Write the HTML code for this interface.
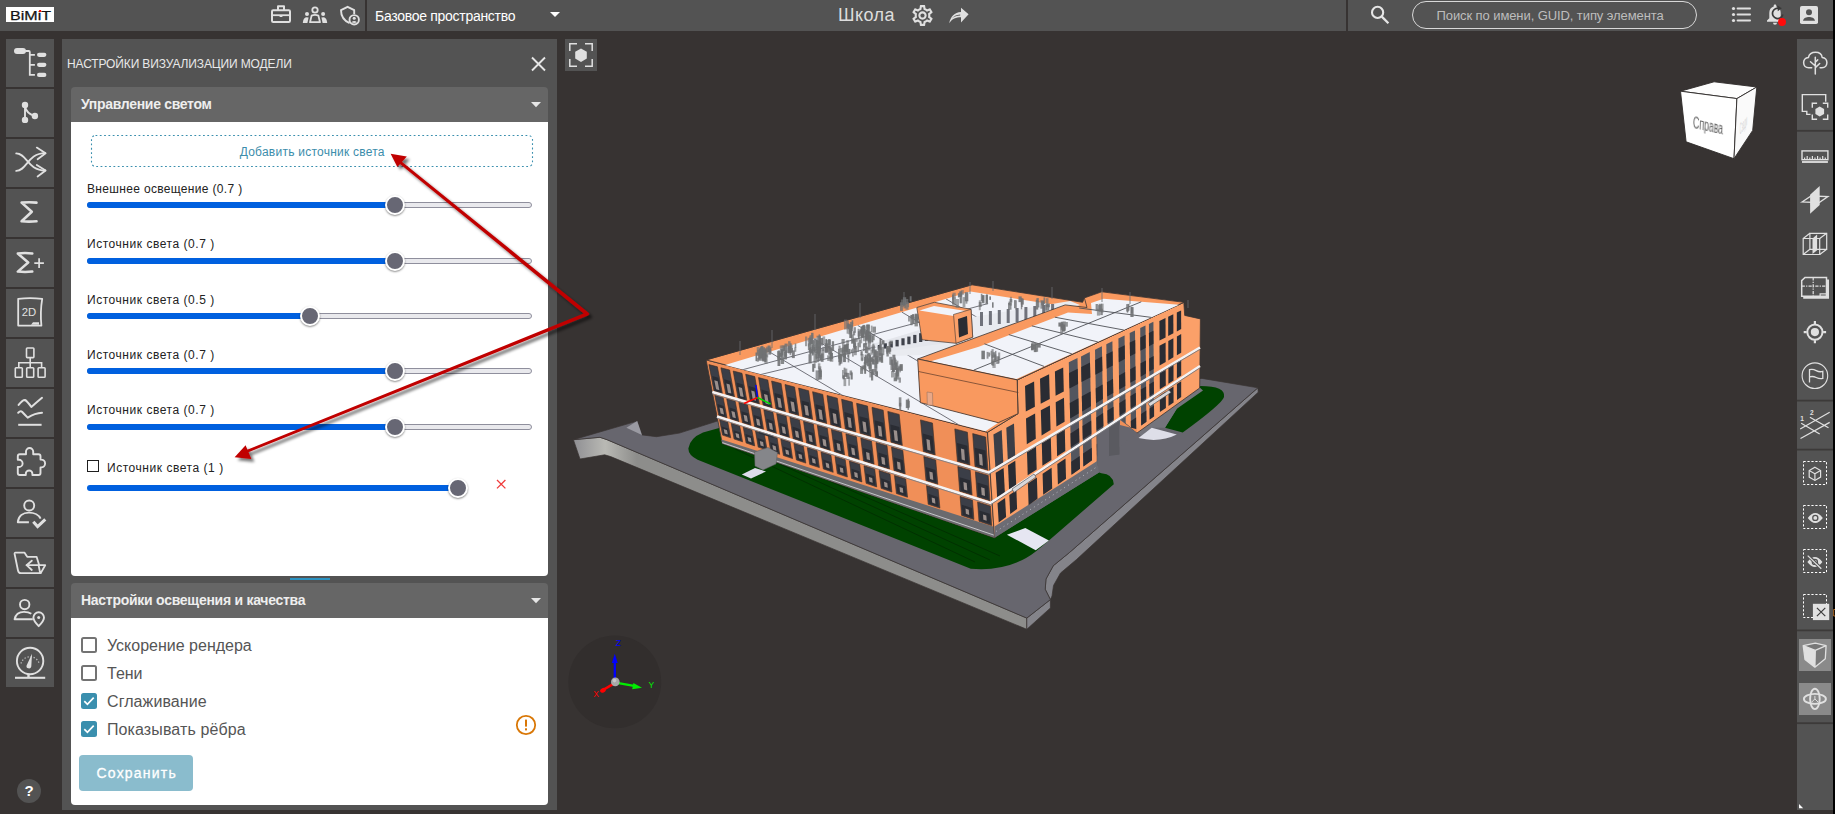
<!DOCTYPE html>
<html lang="ru">
<head>
<meta charset="utf-8">
<title>BIMIT</title>
<style>
*{box-sizing:border-box;margin:0;padding:0}
html,body{width:1835px;height:814px;overflow:hidden;background:#373332;font-family:"Liberation Sans",sans-serif;}
.abs{position:absolute}
#top{position:absolute;left:0;top:0;width:1835px;height:31px;background:#535353}
.t{position:absolute;white-space:nowrap;line-height:1}
#logo{position:absolute;left:6px;top:7px;width:48px;height:15px;background:#fff}
.lb{position:absolute;left:6px;width:48px;height:48px;background:#535353}
.lb svg,.rb svg{position:absolute;left:0;top:0}
#panel{position:absolute;left:62px;top:39px;width:495px;height:771px;background:#535353}
.ah{position:absolute;left:9px;width:477px;background:#666;border-radius:4px 4px 0 0}
.ab{position:absolute;left:9px;width:477px;background:#fff;border-radius:0 0 4px 4px}
#right{position:absolute;left:1797px;top:39px;width:36px;height:771px;background:#535353}

.ah{left:71px}.ab{left:71px}
.sl{font-size:12px;color:#222}
.hb{font-size:14px;font-weight:bold;color:#eee}
.trk{position:absolute;height:6px;border:1px solid #8f8f9d;background:#e9e9ed;border-radius:3px}
.prg{position:absolute;height:6px;background:#0060df;border-radius:3px}
.thb{position:absolute;width:20px;height:20px;border-radius:50%;background:#676774;border:2px solid #fff;box-shadow:0 1px 2px rgba(0,0,0,.45)}
.cb{position:absolute;left:81px;width:16px;height:16px;border:2px solid #737373;border-radius:2.500px;background:#fff}
.cb.on{border:none;background:#3a8fae}
.cl{left:107px;font-size:16px;color:#555}
</style>
</head>
<body>
<div id="top">
  <div id="logo"><svg width="48" height="15" viewBox="0 0 48 15"><text x="4" y="12.700" font-family="Liberation Sans, sans-serif" font-size="13.200" fill="#151515" stroke="#151515" stroke-width="0.250" textLength="41" lengthAdjust="spacingAndGlyphs">BiMiT</text><rect x="33.100" y="3" width="2" height="1.900" fill="#ff0000"/></svg></div>
  <!-- briefcase -->
  <svg class="abs" style="left:268px;top:2px" width="26" height="26" viewBox="0 0 26 26" fill="none" stroke="#e0e0e0" stroke-width="2" stroke-linejoin="round"><rect x="4" y="8.2" width="18" height="11.8" rx="1.2"/><path d="M10 8V4.2h6V8"/><path d="M4 13.2h18" stroke-width="1.8"/><rect x="11.6" y="13" width="2.8" height="2" fill="#e0e0e0" stroke="none"/></svg>
  <!-- people -->
  <svg class="abs" style="left:301px;top:2px" width="28" height="26" viewBox="0 0 28 26" fill="none" stroke="#e0e0e0" stroke-width="1.8"><circle cx="14" cy="8" r="2.7"/><path d="M9 20.2 L10.6 13.6 Q14 12.2 17.4 13.6 L19 20.2 Z" stroke-linejoin="round"/><g fill="#e0e0e0" stroke="none"><circle cx="6" cy="12" r="2"/><circle cx="22.1" cy="12" r="2"/><path d="M1.8 21 Q2.2 16 5 15.2 L7.6 15.4 L6.4 21Z"/><path d="M26.2 21 Q25.8 16 23 15.2 L20.4 15.4 L21.6 21Z"/></g></svg>
  <!-- shield user -->
  <svg class="abs" style="left:337px;top:2px" width="26" height="26" viewBox="0 0 26 26" fill="none" stroke="#e0e0e0" stroke-width="1.9" stroke-linejoin="round"><path d="M12.6 21.2 C7 18.6 4 14.5 4 8.2 L10.6 4.8 L17.2 8.2 V12"/><circle cx="17.2" cy="17.8" r="4.7" fill="#535353"/><g fill="#e0e0e0" stroke="none"><circle cx="17.2" cy="16.3" r="1.5"/><path d="M14.4 20.3 Q17.2 17.6 20 20.3 Q17.2 21.8 14.4 20.3Z"/></g></svg>
  <div class="abs" style="left:365px;top:0;width:2px;height:31px;background:#373332"></div>
  <div class="t" id="tspace" style="letter-spacing:-0.29px;left:375px;top:9px;font-size:14px;color:#fff">Базовое пространство</div>
  <svg class="abs" style="left:549px;top:11px" width="12" height="7" viewBox="0 0 12 7"><path d="M1 1h10L6 6z" fill="#fff"/></svg>
  <div class="t" id="tschool" style="letter-spacing:0.45px;left:838px;top:6px;font-size:18px;color:#ddd">Школа</div>
  <!-- gear -->
  <svg class="abs" style="left:910px;top:3px" width="25" height="25" viewBox="0 0 24 24"><path fill="#e0e0e0" d="M19.43 12.98c.04-.32.07-.64.07-.98 0-.34-.03-.66-.07-.98l2.11-1.65c.19-.15.24-.42.12-.64l-2-3.46c-.09-.16-.26-.25-.44-.25-.06 0-.12.01-.17.03l-2.49 1c-.52-.4-1.08-.73-1.69-.98l-.38-2.65C14.46 2.18 14.25 2 14 2h-4c-.25 0-.46.18-.49.42l-.38 2.65c-.61.25-1.17.59-1.69.98l-2.49-1c-.06-.02-.12-.03-.18-.03-.17 0-.34.09-.43.25l-2 3.46c-.13.22-.07.49.12.64l2.11 1.65c-.04.32-.07.65-.07.98 0 .33.03.66.07.98l-2.11 1.65c-.19.15-.24.42-.12.64l2 3.46c.09.16.26.25.44.25.06 0 .12-.01.17-.03l2.49-1c.52.4 1.08.73 1.69.98l.38 2.65c.03.24.24.42.49.42h4c.25 0 .46-.18.49-.42l.38-2.65c.61-.25 1.17-.59 1.69-.98l2.49 1c.06.02.12.03.18.03.17 0 .34-.09.43-.25l2-3.46c.12-.22.07-.49-.12-.64l-2.11-1.65zm-1.98-1.71c.04.31.05.52.05.73 0 .21-.02.43-.05.73l-.14 1.13.89.7 1.08.84-.7 1.21-1.27-.51-1.04-.42-.9.68c-.43.32-.84.56-1.25.73l-1.06.43-.16 1.13-.2 1.35h-1.4l-.19-1.35-.16-1.13-1.06-.43c-.43-.18-.83-.41-1.23-.71l-.91-.7-1.06.43-1.27.51-.7-1.21 1.08-.84.89-.7-.14-1.13c-.03-.31-.05-.54-.05-.74s.02-.43.05-.73l.14-1.13-.89-.7-1.08-.84.7-1.21 1.27.51 1.04.42.9-.68c.43-.32.84-.56 1.25-.73l1.06-.43.16-1.13.2-1.35h1.39l.19 1.35.16 1.13 1.06.43c.43.18.83.41 1.23.71l.91.7 1.06-.43 1.27-.51.7 1.21-1.07.85-.89.7.14 1.13zM12 8c-2.21 0-4 1.79-4 4s1.790 4 4 4 4-1.790 4-4-1.790-4-4-4zm0 6c-1.100 0-2-.9-2-2s.9-2 2-2 2 .9 2 2-.9 2-2 2z"/></svg>
  <!-- share -->
  <svg class="abs" style="left:947px;top:5px" width="24" height="20" viewBox="0 0 24 20"><path fill="#e0e0e0" d="M21.6 9.3 L14 2.8 V7 C7.5 7.6 3.6 11.4 2.2 18.2 C5.4 13.6 8.9 12.2 14 12.2 V17.6 Z M13.2 9.4 C9 9.6 6.6 11.2 5 13.6 C7.4 11.4 10 10.6 13.2 10.6Z" fill-rule="evenodd"/></svg>
  <div class="abs" style="left:1346px;top:0;width:2px;height:31px;background:#373332"></div>
  <!-- search -->
  <svg class="abs" style="left:1366px;top:2px" width="26" height="26" viewBox="0 0 26 26" fill="none" stroke="#e6e6e6" stroke-width="2.1"><circle cx="11.6" cy="10.4" r="5.6"/><path d="M15.8 14.6 L22.4 21.2" stroke-width="2.3"/></svg>
  <div class="abs" style="left:1412px;top:1px;width:285px;height:28px;border:1px solid #d8d8d8;border-radius:14px"></div>
  <div class="t" id="tsearch" style="letter-spacing:-0.09px;left:1436.5px;top:9px;font-size:13px;color:#bdbdbd">Поиск по имени, GUID, типу элемента</div>
  <!-- list -->
  <svg class="abs" style="left:1730px;top:4px" width="24" height="22" viewBox="0 0 24 22" fill="#e0e0e0"><circle cx="3.5" cy="4.5" r="1.6"/><circle cx="3.5" cy="10.5" r="1.6"/><circle cx="3.5" cy="16.5" r="1.6"/><rect x="6.6" y="3.5" width="14.4" height="2" rx="1"/><rect x="6.6" y="9.500" width="14.4" height="2" rx="1"/><rect x="6.6" y="15.5" width="14.4" height="2" rx="1"/></svg>
  <!-- bell -->
  <svg class="abs" style="left:1763px;top:2px" width="26" height="26" viewBox="0 0 26 26"><path fill="#e0e0e0" d="M12 2.600 c-.8 0-1.300.5-1.300 1.300 v.7 C7.800 5.400 6.300 7.900 6.300 11 v5.200 L4 18.500 v1.200 h16 v-1.200 l-2.300-2.300 V11 c0-3.100-1.500-5.600-4.400-6.400 v-.7 c0-.8-.5-1.300-1.300-1.300z M10 20.700 a2 2 0 0 0 4 0z"/><path d="M16.500 6.500 A5.200 5.200 0 1 0 19.800 12.500" fill="none" stroke="#3a3a3a" stroke-width="1.700"/><path d="M14.200 3.300 L18.800 6.300 L14.800 9.200z" fill="#3a3a3a"/><circle cx="19" cy="19.900" r="4" fill="#ff0a0a"/></svg>
  <!-- account -->
  <svg class="abs" style="left:1799px;top:5px" width="20" height="20" viewBox="0 0 20 20"><rect x="1" y="1" width="18" height="18" rx="1.800" fill="#e0e0e0"/><circle cx="10" cy="7.200" r="3" fill="#535353"/><path d="M4 15.800 C4.500 12.800 7.500 12 10 12 S15.500 12.800 16 15.800z" fill="#535353"/></svg>
</div>
<div class="lb" style="top:39px"><svg width="48" height="48" viewBox="0 0 48 48"><g fill="#e0e0e0" stroke="none"><rect x="8" y="9" width="12" height="6" rx="3"/><rect x="31" y="13.700" width="9.400" height="4.200" rx="2.100"/><rect x="31" y="23.700" width="9.400" height="4.200" rx="2.100"/><rect x="31" y="33.800" width="9.400" height="4.200" rx="2.100"/></g><path d="M19.500 12H22.800a1 1 0 0 1 1 1V35.900H28.900M23.800 15.800H28.900M23.800 25.800H28.900" fill="none" stroke="#e0e0e0" stroke-width="1.800"/></svg></div>
<div class="lb" style="top:89px"><svg width="48" height="48" viewBox="0 0 48 48"><g fill="#e0e0e0"><circle cx="19" cy="15.900" r="3.200"/><circle cx="19" cy="30.900" r="3.200"/><circle cx="28.900" cy="27" r="3.200"/></g><path d="M19 16V31M19 17.500C20 22.500 24 25.500 28.500 27" fill="none" stroke="#e0e0e0" stroke-width="1.900"/></svg></div>
<div class="lb" style="top:139px"><svg width="48" height="48" viewBox="0 0 48 48"><g fill="none" stroke="#e0e0e0" stroke-width="1.800" stroke-linecap="round" stroke-linejoin="round"><path d="M10.200 14.400C21 14.400 21.500 31.500 39.200 31.500"/><path d="M10.200 31.900C21 31.900 21.500 14.200 39.200 14.200"/><path d="M30.800 8.600L39.600 14.200 31.600 20.200"/><path d="M30.800 26L39.600 31.500 31.600 37.500"/></g></svg></div>
<div class="lb" style="top:189px"><svg width="48" height="48" viewBox="0 0 48 48"><path d="M30.500 13.600Q23 12.800 15.600 13.600L25.800 22.700 15.600 32.300Q23 33 30.500 32.300" fill="none" stroke="#e0e0e0" stroke-width="2.600" stroke-linecap="round" stroke-linejoin="round"/></svg></div>
<div class="lb" style="top:239px"><svg width="48" height="48" viewBox="0 0 48 48"><path d="M26.300 14.500Q19 13.700 11.800 14.500L22.200 23.500 11.800 32.600Q19 33.400 26.300 32.600" fill="none" stroke="#e0e0e0" stroke-width="2.500" stroke-linecap="round" stroke-linejoin="round"/><path d="M28.300 24.100H37.900M33.100 19.300V28.900" stroke="#e0e0e0" stroke-width="1.700" fill="none"/></svg></div>
<div class="lb" style="top:289px"><svg width="48" height="48" viewBox="0 0 48 48"><path d="M12.200 9.800Q24 8.600 36.200 9.800Q34 23 35.400 36.600H12.200Z" fill="none" stroke="#e0e0e0" stroke-width="1.800" stroke-linejoin="round"/><path d="M25 35.800L27 33.200H33V35.800Z" fill="#e0e0e0"/><text x="15.800" y="27" font-family="Liberation Sans, sans-serif" font-size="11.500" fill="#e0e0e0" textLength="14.500" lengthAdjust="spacingAndGlyphs">2D</text></svg></div>
<div class="lb" style="top:339px"><svg width="48" height="48" viewBox="0 0 48 48"><g fill="none" stroke="#e0e0e0" stroke-width="1.600"><rect x="20.500" y="9" width="7.400" height="9.600" rx="0.800"/><rect x="9.300" y="28.800" width="7" height="9.400" rx="0.800"/><rect x="20.700" y="28.800" width="7" height="9.400" rx="0.800"/><rect x="32.100" y="28.800" width="7" height="9.400" rx="0.800"/><path d="M24.200 18.600V28.800M12.800 28.800V23.800H35.600V28.800"/></g></svg></div>
<div class="lb" style="top:389px"><svg width="48" height="48" viewBox="0 0 48 48"><g fill="none" stroke="#e0e0e0" stroke-width="2" stroke-linecap="round" stroke-linejoin="round"><path d="M12.600 15.900Q17 10.500 19 11Q21 12 25.300 18Q31 13 36 8.800"/><path d="M12.200 23.800Q14.500 21.500 16 22.800Q19 26 21.700 28.600Q29 24 36 23.700"/><path d="M12.200 35.800H35.600" stroke-linecap="butt"/></g></svg></div>
<div class="lb" style="top:439px"><svg width="48" height="48" viewBox="0 0 48 48"><path d="M13.800 15.200H20V12.600a3.600 3.600 0 0 1 7.200 0V15.200H32.500a2 2 0 0 1 2 2V20.600H35.200a3.900 3.900 0 0 1 0 7.800H34.500V34a2 2 0 0 1-2 2H26.400V34.800a3.300 3.300 0 0 0-6.600 0V36H13.800a2 2 0 0 1-2-2V28H13a3.600 3.600 0 0 0 0-7.200H11.800V17.200a2 2 0 0 1 2-2Z" fill="none" stroke="#e0e0e0" stroke-width="1.900" stroke-linejoin="round"/></svg></div>
<div class="lb" style="top:489px"><svg width="48" height="48" viewBox="0 0 48 48"><g fill="none" stroke="#e0e0e0" stroke-width="1.900"><circle cx="23.200" cy="16.500" r="5"/><path d="M22.900 33.200H11.800C12.500 27 17 23.600 22.900 23.600C28.500 23.600 33 26.500 34.600 29.600" stroke-linejoin="round"/><path d="M27.300 32.800L31.600 37.600 39.300 30.300" stroke-width="3"/></g></svg></div>
<div class="lb" style="top:539px"><svg width="48" height="48" viewBox="0 0 48 48"><g fill="none" stroke="#e0e0e0" stroke-width="1.800" stroke-linejoin="round" stroke-linecap="round"><path d="M33.200 26.200L30.600 17.800H21.200L18.400 13.600H9.600Q8.400 13.800 8.600 15L12 31.500Q12.600 34.200 14.800 34.200H34.600"/><path d="M20.600 26.200H39.200L35 33.600Q34.700 34.200 34.200 34.200L32.600 26.200"/><path d="M25.800 21.700L20.600 26.200 25.800 31"/></g></svg></div>
<div class="lb" style="top:589px"><svg width="48" height="48" viewBox="0 0 48 48"><g fill="none" stroke="#e0e0e0" stroke-width="1.900"><circle cx="18.700" cy="15.600" r="4.700"/><path d="M26.800 30.300H8.600C9.500 25.500 13 22.900 18 22.900C21 22.900 23.500 23.500 25.300 24.800" stroke-linejoin="round"/><path d="M32.700 37.200C30 34.500 27.400 31.500 27.400 28.600A5.300 5.300 0 0 1 38 28.600C38 31.500 35.400 34.500 32.700 37.200Z" fill="#535353" stroke-linejoin="round"/></g><circle cx="32.700" cy="28.400" r="1.500" fill="#e0e0e0"/></svg></div>
<div class="lb" style="top:639px"><svg width="48" height="48" viewBox="0 0 48 48"><g fill="none" stroke="#e0e0e0"><circle cx="24.100" cy="22" r="13.200" stroke-width="1.900"/><path d="M15 24.500A9.500 9.500 0 0 1 33.200 24.500" stroke-width="1.200" stroke-dasharray="1.300 1.800" opacity="0.750"/><path d="M22.500 35V38.500" stroke-width="2.400"/><path d="M9 38.800H39.200" stroke-width="2.100"/></g><path d="M26 14.800L25.300 27.600A2.200 2.200 0 0 1 20.600 26.400Z" fill="#e0e0e0"/></svg></div>
<div class="abs" style="left:17px;top:779px;width:24px;height:24px;border-radius:50%;background:#535353"></div><div class="t" id="help" style="left:24.500px;top:782.500px;font-size:15px;font-weight:bold;color:#fff">?</div>
<div id="panel"></div>
<div class="t" id="ptitle" style="letter-spacing:-0.13px;left:67px;top:58px;font-size:12px;color:#e8e8e8">НАСТРОЙКИ ВИЗУАЛИЗАЦИИ МОДЕЛИ</div>
<svg class="abs" style="left:529px;top:54px" width="20" height="20" viewBox="0 0 20 20"><path d="M3 3.500l13 13M16 3.500l-13 13" stroke="#e6e6e6" stroke-width="1.900" fill="none"/></svg>
<div class="ah" style="top:87px;height:35px"></div>
<div class="t hb" id="h1" style="letter-spacing:-0.31px;left:81px;top:97px">Управление светом</div>
<svg class="abs" style="left:530px;top:101px" width="12" height="7" viewBox="0 0 12 7"><path d="M1 1h10L6 6.300z" fill="#e6e6e6"/></svg>
<div class="ab" style="top:122px;height:454px"></div>
<svg class="abs" style="left:90px;top:134px" width="444" height="34"><rect x="1.500" y="1.500" width="441" height="31" rx="4" fill="none" stroke="#3a8fae" stroke-width="1.100" stroke-dasharray="1.800 2.500"/></svg>
<div class="t" id="addbtn" style="letter-spacing:0.24px;left:239.700px;top:145.500px;font-size:12px;color:#3c8dab">Добавить источник света</div>
<div class="t sl" id="l0" style="letter-spacing:0.33px;left:87px;top:183.1px">Внешнее освещение (0.7 )</div><div class="trk" style="left:87px;top:202px;width:445px"></div><div class="prg" style="left:87px;top:202px;width:307.5px"></div><div class="thb" style="left:384.5px;top:195px"></div><div class="t sl" id="l1" style="letter-spacing:0.54px;left:87px;top:238.4px">Источник света (0.7 )</div><div class="trk" style="left:87px;top:257.5px;width:445px"></div><div class="prg" style="left:87px;top:257.5px;width:307.5px"></div><div class="thb" style="left:384.5px;top:250.5px"></div><div class="t sl" id="l2" style="letter-spacing:0.54px;left:87px;top:293.8px">Источник света (0.5 )</div><div class="trk" style="left:87px;top:313px;width:445px"></div><div class="prg" style="left:87px;top:313px;width:222.5px"></div><div class="thb" style="left:299.5px;top:306px"></div><div class="t sl" id="l3" style="letter-spacing:0.54px;left:87px;top:349.1px">Источник света (0.7 )</div><div class="trk" style="left:87px;top:368.3px;width:445px"></div><div class="prg" style="left:87px;top:368.3px;width:307.5px"></div><div class="thb" style="left:384.5px;top:361.3px"></div><div class="t sl" id="l4" style="letter-spacing:0.54px;left:87px;top:404.4px">Источник света (0.7 )</div><div class="trk" style="left:87px;top:424px;width:445px"></div><div class="prg" style="left:87px;top:424px;width:307.5px"></div><div class="thb" style="left:384.5px;top:417px"></div><div class="abs" style="left:87px;top:460px;width:12px;height:12px;border:1px solid #1f1f1f;background:#fff"></div><div class="t sl" id="l5" style="letter-spacing:0.54px;left:107px;top:462px">Источник света (1 )</div><div class="prg" style="left:87px;top:485px;width:371.0px"></div><div class="thb" style="left:448.0px;top:478px"></div><svg class="abs" style="left:495px;top:478px" width="12" height="12" viewBox="0 0 12 12"><path d="M2 2l8.4 8.400M10.400 2L2 10.400" stroke="#f03c3c" stroke-width="1.300" fill="none"/></svg>
<div class="abs" style="left:290px;top:578px;width:40px;height:2px;background:#2b93c2"></div>
<div class="ah" style="top:583px;height:35px"></div>
<div class="t hb" id="h2" style="letter-spacing:-0.27px;left:81px;top:593px">Настройки освещения и качества</div>
<svg class="abs" style="left:530px;top:597px" width="12" height="7" viewBox="0 0 12 7"><path d="M1 1h10L6 6.300z" fill="#e6e6e6"/></svg>
<div class="ab" style="top:618px;height:187px"></div>
<div class="cb" style="top:637px"></div><div class="t cl" id="c1" style="top:638px">Ускорение рендера</div>
<div class="cb" style="top:665px"></div><div class="t cl" id="c2" style="top:666px">Тени</div>
<div class="cb on" style="top:693px"><svg width="16" height="16" viewBox="0 0 16 16"><path d="M3.300 8.200l3.100 3.100 6.300-6.600" stroke="#fff" stroke-width="1.700" fill="none"/></svg></div><div class="t cl" id="c3" style="letter-spacing:0.08px;top:694px">Сглаживание</div>
<div class="cb on" style="top:721px"><svg width="16" height="16" viewBox="0 0 16 16"><path d="M3.300 8.200l3.100 3.100 6.300-6.600" stroke="#fff" stroke-width="1.700" fill="none"/></svg></div><div class="t cl" id="c4" style="letter-spacing:0.10px;top:722px">Показывать рёбра</div>
<svg class="abs" style="left:514px;top:713px" width="24" height="24" viewBox="0 0 24 24"><circle cx="12" cy="12" r="9.200" fill="none" stroke="#d97706" stroke-width="1.800"/><rect x="11" y="6.600" width="2" height="7" fill="#d97706"/><rect x="11" y="15.300" width="2" height="2.100" fill="#d97706"/></svg>
<div class="abs" id="save" style="left:79px;top:755px;width:114px;height:36px;background:#8abccd;border-radius:4px"></div>
<div class="t" id="savet" style="-webkit-text-stroke:0.300px #fff;left:96.500px;top:766px;font-size:14px;color:#fff;letter-spacing:1.200px">Сохранить</div>
<div class="abs" id="fit" style="left:565px;top:39px;width:32px;height:32px;background:#535353"><svg width="32" height="32" viewBox="0 0 32 32"><path d="M4.800 12V4.800H12M20 4.800H27.200V12M27.200 20V27.200H20M12 27.200H4.800V20" fill="none" stroke="#e0e0e0" stroke-width="1.500"/><polygon points="16.0,9.5 21.8,12.8 21.8,19.5 16.0,22.9 10.2,19.6 10.2,12.8" fill="#e0e0e0"/></svg></div>
<!--VIEWPORT-->
<svg class="abs" style="left:1832px;top:607px;z-index:5" width="3" height="11" viewBox="0 0 3 11"><path d="M3 2.500H1.700V9H3" fill="none" stroke="#d9822b" stroke-width="0.800"/></svg>
<svg class="abs" id="vcube" style="left:1660px;top:70px" width="120" height="100" viewBox="1660 70 120 100">
<polygon points="1680.500,91.200 1714.100,81.800 1756.800,87 1736.900,98.600" fill="#fdfdfd" stroke="#2e2a29" stroke-width="0.900" stroke-linejoin="round"/>
<polygon points="1680.500,91.200 1736.900,98.600 1734,158.700 1686.100,141.800" fill="#ffffff" stroke="#2e2a29" stroke-width="0.900" stroke-linejoin="round"/>
<polygon points="1736.900,98.600 1756.800,87 1752.700,130.400 1734,158.700" fill="#fafafa" stroke="#2e2a29" stroke-width="0.900" stroke-linejoin="round"/>
<text transform="matrix(0.545 0.118 -0.04 1 1692.800 127.900)" font-family="Liberation Sans, sans-serif" font-size="16" fill="#606060" style="filter:blur(0.250px)">Справа</text>
<text transform="matrix(0.16 -0.22 0 1 1739.800 135)" font-family="Liberation Sans, sans-serif" font-size="16" fill="#d2d2d2">Сзади</text>
</svg>
<svg class="abs" id="gizmo" style="left:560px;top:626px" width="112" height="112" viewBox="560 626 112 112">
<circle cx="614.800" cy="681.900" r="46.400" fill="#322e2d"/>
<path d="M614.800 680V661" stroke="#0000ff" stroke-width="2.300"/><path d="M614.800 653.800L617.700 663H611.900Z" fill="#0000ff"/>
<path d="M617 682.800L634 685.900" stroke="#00ee00" stroke-width="2.300"/><path d="M642 687.700L632.200 689.200L633.400 683Z" fill="#00ee00"/>
<path d="M613 684.200L603 690" stroke="#ff0000" stroke-width="2.600"/><ellipse cx="603" cy="690.300" rx="3" ry="2.200" fill="#ff0000" transform="rotate(-30 603 690.300)"/>
<circle cx="615.300" cy="681.900" r="4.300" fill="#a9a9a9"/><circle cx="614.500" cy="680.600" r="1.800" fill="#c8c8c8"/>
<text x="615.700" y="646.300" font-family="Liberation Sans, sans-serif" font-size="8.500" fill="#0000ff">Z</text>
<text x="648.500" y="688.300" font-family="Liberation Sans, sans-serif" font-size="8.500" fill="#00ee00">Y</text>
<text x="593.300" y="696.800" font-family="Liberation Sans, sans-serif" font-size="8.500" fill="#ff0000">X</text>
</svg>
<!--MODEL_START--><svg class="abs" id="model" style="left:0;top:0" width="1835" height="814" viewBox="0 0 1835 814" shape-rendering="geometricPrecision"><defs><linearGradient id="tg" x1="0" x2="1" y1="0" y2="0"><stop offset="0" stop-color="#8f8f93"/><stop offset="0.07" stop-color="#b9b9b4"/><stop offset="0.14" stop-color="#8d8d8b"/><stop offset="1" stop-color="#8d8d8b"/></linearGradient></defs><polygon points="1257.9,387.8 1258.2,392.2 1076.5,559.5 1060.5,573.0 1053.5,585.5 1052.0,596.0 1050.4,599.6 1045.2,589.3 1046.0,579.0 1053.3,565.7 1069.6,552.4" fill="#84848a" stroke="#3a3432" stroke-width="0.7" stroke-linejoin="round"/><polygon points="573.4,439.7 599.9,437.3 607.1,439.7 1026.8,618.1 1026.8,629.3 610.7,456.6 604.7,454.8 580.0,459.0" fill="url(#tg)" stroke="#3a3432" stroke-width="0.7" stroke-linejoin="round"/><polygon points="1026.8,618.1 1050.4,599.6 1050.4,607.9 1026.8,629.3" fill="#84848a" stroke="#3a3432" stroke-width="0.7" stroke-linejoin="round"/><polygon points="573.4,439.7 637.2,421.1 642.0,434.9 656.5,436.7 679.4,433.1 719.1,420.5 1201.9,378.4 1257.9,387.8 1069.6,552.4 1053.3,565.7 1046.0,579.0 1045.2,589.3 1050.4,599.6 1026.8,618.1 607.1,439.7 599.9,437.3" fill="#67666e" stroke="#3a3432" stroke-width="0.7" stroke-linejoin="round"/><polygon points="626.4,427.7 637.2,421.1 642.0,434.9" fill="#9a9aa2"/><path d="M688.4 448.2 Q690 438 703 432.5 L719.1 428 L722.3 443.6 L994.5 537.8 L1099 472.5 L1101.5 473.2 Q1113 474 1113.8 484.2 L1048.9 540.6 L1036.4 551 Q1010 572 970.8 568.7 L697.6 459.7 Q688 455 688.4 448.2Z" fill="#004200"/><path d="M735 449L975 562M760 455L990 560M800 468L1000 556" stroke="#002a00" stroke-width="0.7" fill="none"/><path d="M1200.4 386 Q1226 386 1224 397 Q1222 404 1182.7 432.5 L1165 427.8 L1176.8 408.7Z" fill="#004200"/><polygon points="1137.0,430.5 1199.7,387.5 1203.0,390.5 1176.8,408.7 1165.0,427.8 1151.7,427.8 1141.0,436.0" fill="#74747c"/><polygon points="1006.9,534.7 1025.3,528.1 1048.9,540.6 1035.7,550.2" fill="#e6e6f2"/><polygon points="741.8,474.4 755.0,468.0 766.0,471.5 751.0,478.5" fill="#dcdcea"/><path d="M1138.5 438.1 L1151.7 427.8 L1176.8 434.5 Q1160 443 1138.5 438.1Z" fill="#dedee8"/><polygon points="1109.0,422.0 1119.3,420.0 1119.3,454.4 1109.0,455.0" fill="#5c5c62"/><polygon points="1120.0,424.9 1137.0,429.3 1137.0,404.0 1120.0,396.0" fill="#f08f58"/><polygon points="706.1,359.9 987.5,432.3 994.5,537.8 722.3,443.6" fill="#f08f58" stroke="#3a3432" stroke-width="0.8" stroke-linejoin="round"/><polygon points="721.5,439.4 993.8,526.7 994.5,537.8 722.3,443.6" fill="#6a6a6e"/><path d="M722.3 442.6L994.5 535.3" stroke="#d0d0d4" stroke-width="0.900"/><polygon points="708.9,364.6 717.4,366.8 722.4,393.5 714.0,391.0" fill="#3b3e47" stroke="#3a2a22" stroke-width="0.6" stroke-linejoin="round"/><polygon points="712.2,376.0 718.4,377.7 721.1,392.3 715.0,390.5" fill="#2a2c33"/><polygon points="714.3,380.2 717.7,381.2 719.4,390.2 716.1,389.2" fill="#9a8f8c"/><polygon points="714.8,395.2 723.2,397.7 727.0,418.0 718.7,415.3" fill="#3b3e47" stroke="#3a2a22" stroke-width="0.6" stroke-linejoin="round"/><polygon points="717.5,404.0 723.7,405.9 725.7,416.8 719.6,414.9" fill="#2a2c33"/><polygon points="719.5,407.4 722.8,408.4 724.0,414.6 720.7,413.6" fill="#9a8f8c"/><polygon points="719.5,419.5 727.8,422.2 730.7,437.8 722.5,435.1" fill="#3b3e47" stroke="#3a2a22" stroke-width="0.6" stroke-linejoin="round"/><polygon points="721.8,426.4 727.9,428.4 729.5,436.6 723.4,434.6" fill="#2a2c33"/><polygon points="723.7,429.1 727.0,430.2 727.8,434.5 724.5,433.4" fill="#9a8f8c"/><polygon points="720.9,367.8 729.6,370.0 734.5,396.9 725.9,394.5" fill="#3b3e47" stroke="#3a2a22" stroke-width="0.6" stroke-linejoin="round"/><polygon points="724.1,379.3 730.5,381.0 733.2,395.8 726.8,393.9" fill="#2a2c33"/><polygon points="726.4,383.6 729.7,384.5 731.4,393.6 728.0,392.7" fill="#9a8f8c"/><polygon points="726.7,398.7 735.2,401.2 738.9,421.7 730.4,419.0" fill="#3b3e47" stroke="#3a2a22" stroke-width="0.6" stroke-linejoin="round"/><polygon points="729.4,407.6 735.7,409.5 737.7,420.5 731.4,418.5" fill="#2a2c33"/><polygon points="731.4,411.0 734.7,412.0 735.9,418.3 732.6,417.3" fill="#9a8f8c"/><polygon points="731.2,423.3 739.7,426.0 742.6,441.8 734.1,439.0" fill="#3b3e47" stroke="#3a2a22" stroke-width="0.6" stroke-linejoin="round"/><polygon points="733.6,430.2 739.8,432.3 741.3,440.6 735.1,438.5" fill="#2a2c33"/><polygon points="735.5,433.0 738.8,434.1 739.5,438.4 736.3,437.3" fill="#9a8f8c"/><polygon points="733.2,371.0 742.0,373.3 746.8,400.5 738.0,398.0" fill="#3b3e47" stroke="#3a2a22" stroke-width="0.6" stroke-linejoin="round"/><polygon points="736.3,382.6 742.9,384.4 745.5,399.3 739.0,397.4" fill="#2a2c33"/><polygon points="738.6,387.0 742.0,387.9 743.6,397.1 740.3,396.2" fill="#9a8f8c"/><polygon points="738.8,402.3 747.5,404.8 751.1,425.6 742.5,422.8" fill="#3b3e47" stroke="#3a2a22" stroke-width="0.6" stroke-linejoin="round"/><polygon points="741.4,411.2 747.9,413.2 749.9,424.4 743.4,422.3" fill="#2a2c33"/><polygon points="743.6,414.7 746.9,415.7 748.0,422.1 744.7,421.1" fill="#9a8f8c"/><polygon points="743.2,427.1 751.9,429.9 754.7,445.9 746.1,443.0" fill="#3b3e47" stroke="#3a2a22" stroke-width="0.6" stroke-linejoin="round"/><polygon points="745.5,434.1 752.0,436.2 753.4,444.6 747.0,442.5" fill="#2a2c33"/><polygon points="747.5,437.0 750.8,438.0 751.6,442.4 748.3,441.3" fill="#9a8f8c"/><polygon points="745.7,374.2 754.8,376.6 759.4,404.1 750.4,401.5" fill="#3b3e47" stroke="#3a2a22" stroke-width="0.6" stroke-linejoin="round"/><polygon points="748.8,386.0 755.6,387.9 758.1,402.9 751.4,401.0" fill="#2a2c33"/><polygon points="751.2,390.4 754.5,391.4 756.1,400.7 752.8,399.8" fill="#9a8f8c"/><polygon points="751.2,405.9 760.1,408.5 763.6,429.5 754.7,426.7" fill="#3b3e47" stroke="#3a2a22" stroke-width="0.6" stroke-linejoin="round"/><polygon points="753.8,415.0 760.5,417.0 762.4,428.3 755.7,426.2" fill="#2a2c33"/><polygon points="756.0,418.5 759.3,419.5 760.4,426.0 757.1,425.0" fill="#9a8f8c"/><polygon points="755.5,431.0 764.3,433.9 767.1,450.0 758.2,447.1" fill="#3b3e47" stroke="#3a2a22" stroke-width="0.6" stroke-linejoin="round"/><polygon points="757.7,438.1 764.4,440.3 765.8,448.8 759.2,446.6" fill="#2a2c33"/><polygon points="759.8,441.0 763.1,442.1 763.8,446.5 760.6,445.4" fill="#9a8f8c"/><polygon points="758.5,377.6 767.8,380.0 772.2,407.9 763.1,405.2" fill="#3b3e47" stroke="#3a2a22" stroke-width="0.6" stroke-linejoin="round"/><polygon points="761.5,389.5 768.5,391.4 771.0,406.7 764.0,404.7" fill="#2a2c33"/><polygon points="764.0,394.0 767.4,394.9 768.9,404.4 765.6,403.4" fill="#9a8f8c"/><polygon points="763.8,409.6 772.9,412.3 776.4,433.5 767.3,430.6" fill="#3b3e47" stroke="#3a2a22" stroke-width="0.6" stroke-linejoin="round"/><polygon points="766.4,418.8 773.3,420.9 775.1,432.3 768.2,430.1" fill="#2a2c33"/><polygon points="768.7,422.4 772.0,423.4 773.0,429.9 769.7,428.9" fill="#9a8f8c"/><polygon points="768.0,435.0 777.1,437.9 779.7,454.3 770.7,451.3" fill="#3b3e47" stroke="#3a2a22" stroke-width="0.6" stroke-linejoin="round"/><polygon points="770.2,442.2 777.1,444.4 778.5,453.0 771.6,450.7" fill="#2a2c33"/><polygon points="772.4,445.1 775.7,446.2 776.4,450.7 773.1,449.6" fill="#9a8f8c"/><polygon points="771.6,381.0 781.1,383.5 785.4,411.7 776.0,408.9" fill="#3b3e47" stroke="#3a2a22" stroke-width="0.6" stroke-linejoin="round"/><polygon points="774.6,393.0 781.8,395.0 784.1,410.4 777.0,408.4" fill="#2a2c33"/><polygon points="777.1,397.6 780.5,398.6 782.0,408.1 778.6,407.2" fill="#9a8f8c"/><polygon points="776.7,413.4 786.1,416.1 789.4,437.6 780.1,434.7" fill="#3b3e47" stroke="#3a2a22" stroke-width="0.6" stroke-linejoin="round"/><polygon points="779.3,422.7 786.4,424.8 788.1,436.4 781.1,434.1" fill="#2a2c33"/><polygon points="781.6,426.3 784.9,427.3 786.0,434.0 782.7,432.9" fill="#9a8f8c"/><polygon points="780.8,439.1 790.1,442.1 792.6,458.6 783.4,455.5" fill="#3b3e47" stroke="#3a2a22" stroke-width="0.6" stroke-linejoin="round"/><polygon points="783.0,446.4 790.0,448.7 791.4,457.4 784.4,455.0" fill="#2a2c33"/><polygon points="785.3,449.4 788.5,450.4 789.2,454.9 786.0,453.9" fill="#9a8f8c"/><polygon points="785.0,384.5 794.6,387.0 798.8,415.5 789.3,412.8" fill="#3b3e47" stroke="#3a2a22" stroke-width="0.6" stroke-linejoin="round"/><polygon points="787.9,396.7 795.3,398.7 797.6,414.3 790.2,412.2" fill="#2a2c33"/><polygon points="790.5,401.3 793.9,402.3 795.3,411.9 792.0,411.0" fill="#9a8f8c"/><polygon points="789.9,417.3 799.5,420.1 802.7,441.8 793.2,438.8" fill="#3b3e47" stroke="#3a2a22" stroke-width="0.6" stroke-linejoin="round"/><polygon points="792.4,426.6 799.7,428.9 801.5,440.5 794.2,438.3" fill="#2a2c33"/><polygon points="794.9,430.4 798.2,431.4 799.2,438.1 795.9,437.1" fill="#9a8f8c"/><polygon points="793.9,443.3 803.4,446.3 805.8,463.1 796.4,459.9" fill="#3b3e47" stroke="#3a2a22" stroke-width="0.6" stroke-linejoin="round"/><polygon points="796.1,450.6 803.3,453.0 804.6,461.8 797.4,459.4" fill="#2a2c33"/><polygon points="798.4,453.7 801.7,454.8 802.4,459.3 799.1,458.2" fill="#9a8f8c"/><polygon points="798.6,388.1 808.6,390.7 812.6,419.5 802.8,416.7" fill="#3b3e47" stroke="#3a2a22" stroke-width="0.6" stroke-linejoin="round"/><polygon points="801.5,400.4 809.1,402.5 811.4,418.3 803.8,416.1" fill="#2a2c33"/><polygon points="804.2,405.1 807.6,406.1 809.0,415.8 805.6,414.9" fill="#9a8f8c"/><polygon points="803.5,421.2 813.3,424.1 816.3,446.1 806.6,443.0" fill="#3b3e47" stroke="#3a2a22" stroke-width="0.6" stroke-linejoin="round"/><polygon points="805.9,430.7 813.4,433.0 815.1,444.8 807.6,442.5" fill="#2a2c33"/><polygon points="808.5,434.5 811.8,435.5 812.7,442.3 809.4,441.3" fill="#9a8f8c"/><polygon points="807.3,447.6 817.0,450.7 819.4,467.6 809.7,464.4" fill="#3b3e47" stroke="#3a2a22" stroke-width="0.6" stroke-linejoin="round"/><polygon points="809.4,455.0 816.9,457.4 818.1,466.3 810.7,463.8" fill="#2a2c33"/><polygon points="811.9,458.1 815.1,459.2 815.8,463.8 812.5,462.7" fill="#9a8f8c"/><polygon points="812.6,391.7 822.8,394.4 826.7,423.6 816.7,420.7" fill="#3b3e47" stroke="#3a2a22" stroke-width="0.6" stroke-linejoin="round"/><polygon points="815.5,404.2 823.3,406.4 825.5,422.3 817.6,420.1" fill="#2a2c33"/><polygon points="818.3,409.0 821.6,410.0 823.0,419.9 819.6,418.9" fill="#9a8f8c"/><polygon points="817.3,425.3 827.3,428.2 830.3,450.5 820.4,447.3" fill="#3b3e47" stroke="#3a2a22" stroke-width="0.6" stroke-linejoin="round"/><polygon points="819.7,434.9 827.5,437.2 829.1,449.2 821.3,446.8" fill="#2a2c33"/><polygon points="822.4,438.8 825.7,439.8 826.6,446.7 823.3,445.6" fill="#9a8f8c"/><polygon points="821.0,451.9 830.9,455.1 833.2,472.3 823.3,468.9" fill="#3b3e47" stroke="#3a2a22" stroke-width="0.6" stroke-linejoin="round"/><polygon points="823.1,459.4 830.8,462.0 832.0,471.0 824.3,468.4" fill="#2a2c33"/><polygon points="825.6,462.6 828.9,463.7 829.5,468.4 826.3,467.3" fill="#9a8f8c"/><polygon points="827.0,395.5 837.3,398.2 841.1,427.8 830.8,424.8" fill="#3b3e47" stroke="#3a2a22" stroke-width="0.6" stroke-linejoin="round"/><polygon points="829.7,408.1 837.8,410.3 839.9,426.5 831.8,424.2" fill="#2a2c33"/><polygon points="832.6,413.0 836.0,413.9 837.3,424.0 833.9,423.0" fill="#9a8f8c"/><polygon points="831.4,429.4 841.7,432.5 844.6,455.0 834.4,451.8" fill="#3b3e47" stroke="#3a2a22" stroke-width="0.6" stroke-linejoin="round"/><polygon points="833.8,439.2 841.8,441.6 843.3,453.7 835.4,451.2" fill="#2a2c33"/><polygon points="836.6,443.1 839.9,444.1 840.8,451.1 837.5,450.0" fill="#9a8f8c"/><polygon points="835.0,456.4 845.2,459.7 847.4,477.0 837.3,473.6" fill="#3b3e47" stroke="#3a2a22" stroke-width="0.6" stroke-linejoin="round"/><polygon points="837.1,464.0 845.0,466.6 846.2,475.7 838.2,473.1" fill="#2a2c33"/><polygon points="839.7,467.3 843.0,468.3 843.6,473.1 840.3,472.0" fill="#9a8f8c"/><polygon points="841.6,399.3 852.3,402.1 855.9,432.0 845.3,429.0" fill="#3b3e47" stroke="#3a2a22" stroke-width="0.6" stroke-linejoin="round"/><polygon points="844.3,412.1 852.7,414.4 854.6,430.8 846.3,428.4" fill="#2a2c33"/><polygon points="847.3,417.1 850.7,418.0 851.9,428.1 848.6,427.2" fill="#9a8f8c"/><polygon points="845.9,433.7 856.4,436.8 859.2,459.6 848.8,456.3" fill="#3b3e47" stroke="#3a2a22" stroke-width="0.6" stroke-linejoin="round"/><polygon points="848.2,443.5 856.5,446.0 858.0,458.3 849.7,455.7" fill="#2a2c33"/><polygon points="851.1,447.5 854.4,448.6 855.3,455.6 852.0,454.6" fill="#9a8f8c"/><polygon points="849.4,461.0 859.7,464.3 861.9,481.9 851.5,478.4" fill="#3b3e47" stroke="#3a2a22" stroke-width="0.6" stroke-linejoin="round"/><polygon points="851.4,468.7 859.5,471.3 860.7,480.6 852.5,477.8" fill="#2a2c33"/><polygon points="854.1,472.0 857.4,473.1 858.0,477.9 854.7,476.8" fill="#9a8f8c"/><polygon points="856.6,403.3 867.5,406.1 871.0,436.4 860.2,433.3" fill="#3b3e47" stroke="#3a2a22" stroke-width="0.6" stroke-linejoin="round"/><polygon points="859.3,416.2 867.9,418.5 869.7,435.1 861.2,432.6" fill="#2a2c33"/><polygon points="862.4,421.3 865.7,422.2 866.9,432.4 863.6,431.5" fill="#9a8f8c"/><polygon points="860.8,438.0 871.5,441.2 874.1,464.3 863.5,460.9" fill="#3b3e47" stroke="#3a2a22" stroke-width="0.6" stroke-linejoin="round"/><polygon points="863.0,448.0 871.5,450.6 872.9,463.0 864.5,460.3" fill="#2a2c33"/><polygon points="866.0,452.1 869.3,453.1 870.1,460.2 866.8,459.2" fill="#9a8f8c"/><polygon points="864.0,465.7 874.7,469.1 876.7,486.9 866.1,483.3" fill="#3b3e47" stroke="#3a2a22" stroke-width="0.6" stroke-linejoin="round"/><polygon points="866.0,473.5 874.4,476.2 875.5,485.5 867.1,482.7" fill="#2a2c33"/><polygon points="868.9,476.9 872.2,477.9 872.7,482.8 869.5,481.7" fill="#9a8f8c"/><polygon points="872.0,407.3 883.2,410.2 886.4,440.9 875.4,437.7" fill="#3b3e47" stroke="#3a2a22" stroke-width="0.6" stroke-linejoin="round"/><polygon points="874.6,420.3 883.4,422.8 885.2,439.6 876.4,437.0" fill="#2a2c33"/><polygon points="877.8,425.5 881.2,426.5 882.3,436.8 878.9,435.9" fill="#9a8f8c"/><polygon points="876.0,442.5 887.0,445.7 889.5,469.1 878.6,465.7" fill="#3b3e47" stroke="#3a2a22" stroke-width="0.6" stroke-linejoin="round"/><polygon points="878.2,452.6 886.9,455.2 888.3,467.8 879.5,465.0" fill="#2a2c33"/><polygon points="881.2,456.8 884.6,457.8 885.3,465.0 882.0,464.0" fill="#9a8f8c"/><polygon points="879.1,470.5 890.0,474.0 891.9,492.0 881.1,488.3" fill="#3b3e47" stroke="#3a2a22" stroke-width="0.6" stroke-linejoin="round"/><polygon points="881.0,478.3 889.7,481.2 890.7,490.6 882.1,487.7" fill="#2a2c33"/><polygon points="884.0,481.8 887.3,482.9 887.8,487.8 884.5,486.7" fill="#9a8f8c"/><polygon points="887.8,411.4 899.2,414.4 902.3,445.4 891.0,442.2" fill="#3b3e47" stroke="#3a2a22" stroke-width="0.6" stroke-linejoin="round"/><polygon points="890.3,424.6 899.4,427.1 901.1,444.1 892.0,441.5" fill="#2a2c33"/><polygon points="893.6,429.9 897.0,430.8 898.0,441.3 894.7,440.4" fill="#9a8f8c"/><polygon points="891.5,447.1 902.8,450.4 905.2,474.0 894.0,470.5" fill="#3b3e47" stroke="#3a2a22" stroke-width="0.6" stroke-linejoin="round"/><polygon points="893.7,457.3 902.7,460.0 904.0,472.7 895.0,469.9" fill="#2a2c33"/><polygon points="896.9,461.5 900.2,462.5 900.9,469.9 897.6,468.8" fill="#9a8f8c"/><polygon points="894.5,475.4 905.7,479.0 907.5,497.2 896.4,493.5" fill="#3b3e47" stroke="#3a2a22" stroke-width="0.6" stroke-linejoin="round"/><polygon points="896.4,483.4 905.3,486.3 906.3,495.9 897.4,492.9" fill="#2a2c33"/><polygon points="899.5,486.9 902.8,488.0 903.3,493.0 900.0,491.9" fill="#9a8f8c"/><polygon points="920.5,419.9 932.5,423.1 935.2,455.0 923.4,451.5" fill="#3b3e47" stroke="#3a2a22" stroke-width="0.6" stroke-linejoin="round"/><polygon points="922.8,433.5 932.5,436.2 934.0,453.6 924.4,450.8" fill="#2a2c33"/><polygon points="926.4,439.0 929.7,439.9 930.7,450.7 927.4,449.7" fill="#9a8f8c"/><polygon points="923.8,456.5 935.7,460.0 937.8,484.3 926.0,480.6" fill="#3b3e47" stroke="#3a2a22" stroke-width="0.6" stroke-linejoin="round"/><polygon points="925.9,467.0 935.5,469.9 936.6,483.0 927.0,480.0" fill="#2a2c33"/><polygon points="929.3,471.4 932.6,472.5 933.3,480.0 930.0,478.9" fill="#9a8f8c"/><polygon points="926.5,485.6 938.2,489.4 939.9,508.1 928.2,504.2" fill="#3b3e47" stroke="#3a2a22" stroke-width="0.6" stroke-linejoin="round"/><polygon points="928.3,493.8 937.8,496.9 938.7,506.7 929.2,503.5" fill="#2a2c33"/><polygon points="931.7,497.5 934.9,498.6 935.4,503.7 932.1,502.6" fill="#9a8f8c"/><polygon points="954.8,428.9 967.4,432.2 969.9,465.0 957.4,461.4" fill="#3b3e47" stroke="#3a2a22" stroke-width="0.6" stroke-linejoin="round"/><polygon points="957.0,442.9 967.3,445.7 968.7,463.6 958.4,460.7" fill="#2a2c33"/><polygon points="960.9,448.5 964.2,449.5 965.0,460.5 961.7,459.6" fill="#9a8f8c"/><polygon points="957.8,466.5 970.2,470.2 972.1,495.1 959.7,491.2" fill="#3b3e47" stroke="#3a2a22" stroke-width="0.6" stroke-linejoin="round"/><polygon points="959.7,477.2 969.9,480.3 970.9,493.7 960.7,490.5" fill="#2a2c33"/><polygon points="963.4,481.9 966.7,482.9 967.3,490.6 964.0,489.5" fill="#9a8f8c"/><polygon points="960.1,496.4 972.5,500.3 973.9,519.5 961.6,515.4" fill="#3b3e47" stroke="#3a2a22" stroke-width="0.6" stroke-linejoin="round"/><polygon points="961.8,504.7 972.0,508.0 972.7,518.1 962.6,514.7" fill="#2a2c33"/><polygon points="965.5,508.6 968.8,509.7 969.2,514.9 965.9,513.8" fill="#9a8f8c"/><polygon points="972.7,433.6 985.6,437.0 987.9,470.2 975.0,466.5" fill="#3b3e47" stroke="#3a2a22" stroke-width="0.6" stroke-linejoin="round"/><polygon points="974.8,447.7 985.5,450.6 986.7,468.8 976.1,465.7" fill="#2a2c33"/><polygon points="978.8,453.5 982.1,454.4 982.9,465.7 979.6,464.7" fill="#9a8f8c"/><polygon points="975.4,471.7 988.2,475.4 989.9,500.7 977.2,496.7" fill="#3b3e47" stroke="#3a2a22" stroke-width="0.6" stroke-linejoin="round"/><polygon points="977.3,482.5 987.8,485.7 988.7,499.3 978.2,496.0" fill="#2a2c33"/><polygon points="981.1,487.3 984.5,488.3 985.0,496.1 981.7,495.1" fill="#9a8f8c"/><polygon points="977.6,501.9 990.3,506.0 991.6,525.5 979.0,521.2" fill="#3b3e47" stroke="#3a2a22" stroke-width="0.6" stroke-linejoin="round"/><polygon points="979.3,510.4 989.7,513.8 990.4,524.1 980.0,520.6" fill="#2a2c33"/><polygon points="983.0,514.4 986.3,515.5 986.7,520.8 983.4,519.7" fill="#9a8f8c"/><polygon points="754.5,452.0 768.0,447.5 777.5,452.5 776.0,464.0 763.0,470.0 755.0,466.0" fill="#85868a" stroke="#5a5a5e" stroke-width="0.5" stroke-linejoin="round"/><polygon points="759.0,431.0 773.5,435.5 773.5,438.0 759.0,433.5" fill="#2e3036"/><path d="M712.3 392.1L990.2 472.9" stroke="#f3f3f5" stroke-width="2.600"/><path d="M712.3 393.9L990.2 474.7" stroke="#7d7d82" stroke-width="0.900"/><path d="M717.0 416.4L992.2 503.5" stroke="#f3f3f5" stroke-width="2.600"/><path d="M717.0 418.2L992.2 505.3" stroke="#7d7d82" stroke-width="0.900"/><polygon points="987.5,432.3 1017.9,413.7 1017.2,379.9 1183.8,302.3 1184.7,315.4 1200.4,318.9 1199.7,388.0 1137.0,433.0 1120.0,419.0 1097.2,433.7 1097.2,466.1 994.5,537.8" fill="#fba069" stroke="#3a3432" stroke-width="0.8" stroke-linejoin="round"/><polygon points="994.5,526.5 1097.2,461.0 1099.0,472.5 994.5,537.8" fill="#6c6c74"/><path d="M996 531.500L1097.500 466.500" stroke="#c9c9cf" stroke-width="0.800" stroke-dasharray="1 3.500"/><polygon points="993.4,434.6 1001.7,430.1 1003.3,462.8 995.4,467.6" fill="#3b3e47"/><polygon points="995.7,472.8 1003.6,467.9 1004.9,492.8 997.2,498.0" fill="#2a2c33"/><polygon points="997.5,503.2 1005.1,498.0 1006.1,517.1 998.7,522.6" fill="#2a2c33"/><polygon points="1006.3,427.7 1014.0,423.5 1015.2,455.6 1007.8,460.1" fill="#3b3e47"/><polygon points="1008.0,465.2 1015.3,460.7 1016.2,485.2 1009.1,489.9" fill="#2a2c33"/><polygon points="1009.3,495.1 1016.4,490.2 1017.1,509.1 1010.2,514.1" fill="#2a2c33"/><polygon points="1025.0,385.9 1034.1,381.5 1034.9,406.8 1025.8,411.6" fill="#2a2c33"/><polygon points="1026.0,418.4 1035.1,413.5 1035.8,438.8 1026.8,444.2" fill="#2a2c33"/><polygon points="1027.0,452.3 1036.0,446.8 1036.7,469.5 1027.7,475.3" fill="#2a2c33"/><polygon points="1027.9,483.5 1036.9,477.5 1037.5,498.8 1028.6,505.2" fill="#2a2c33"/><polygon points="1040.0,378.7 1049.1,374.2 1049.8,398.9 1040.7,403.7" fill="#2a2c33"/><polygon points="1040.8,410.3 1049.9,405.4 1050.6,430.1 1041.6,435.4" fill="#2a2c33"/><polygon points="1041.8,443.3 1050.8,437.8 1051.4,459.9 1042.4,465.8" fill="#2a2c33"/><polygon points="1042.6,473.7 1051.6,467.7 1052.2,488.5 1043.2,494.8" fill="#2a2c33"/><polygon points="1054.9,371.4 1063.2,367.4 1063.8,391.4 1055.6,395.8" fill="#2a2c33"/><polygon points="1055.7,402.2 1064.0,397.8 1064.6,421.8 1056.4,426.6" fill="#2a2c33"/><polygon points="1056.6,434.4 1064.8,429.4 1065.3,450.9 1057.1,456.2" fill="#2a2c33"/><polygon points="1057.3,463.9 1065.5,458.4 1066.0,478.7 1057.9,484.4" fill="#2a2c33"/><polygon points="1068.8,362.2 1077.5,358.0 1080.0,468.8 1071.5,474.8" fill="#53565f"/><polygon points="1069.1,373.0 1077.7,368.7 1078.1,383.9 1069.5,388.4" fill="#2a2c33"/><polygon points="1069.8,403.0 1078.4,398.2 1078.7,413.4 1070.2,418.5" fill="#2a2c33"/><polygon points="1070.5,433.4 1079.0,428.1 1079.3,441.7 1070.8,447.2" fill="#2a2c33"/><polygon points="1071.2,461.8 1079.7,456.0 1080.0,468.8 1071.5,474.8" fill="#2a2c33"/><polygon points="1081.0,356.4 1089.8,352.1 1092.0,460.3 1083.4,466.4" fill="#53565f"/><polygon points="1081.2,366.9 1090.0,362.5 1090.3,377.4 1081.5,382.0" fill="#2a2c33"/><polygon points="1081.8,396.3 1090.6,391.4 1090.9,406.2 1082.2,411.4" fill="#2a2c33"/><polygon points="1082.5,426.0 1091.2,420.6 1091.4,433.8 1082.8,439.5" fill="#2a2c33"/><polygon points="1083.1,453.6 1091.7,447.8 1092.0,460.3 1083.4,466.4" fill="#2a2c33"/><polygon points="1095.0,349.7 1101.9,346.3 1103.8,451.9 1097.0,456.7" fill="#53565f"/><polygon points="1095.1,360.0 1102.1,356.5 1102.4,371.0 1095.4,374.7" fill="#2a2c33"/><polygon points="1095.7,388.5 1102.6,384.6 1102.9,399.1 1096.0,403.2" fill="#2a2c33"/><polygon points="1096.3,417.4 1103.1,413.1 1103.4,426.1 1096.5,430.5" fill="#2a2c33"/><polygon points="1096.8,444.3 1103.6,439.7 1103.8,451.9 1097.0,456.7" fill="#2a2c33"/><polygon points="1106.3,344.3 1112.4,341.3 1114.1,444.6 1108.1,448.9" fill="#53565f"/><polygon points="1106.4,354.3 1112.6,351.3 1112.8,365.4 1106.7,368.7" fill="#2a2c33"/><polygon points="1106.9,382.2 1113.0,378.8 1113.3,393.0 1107.2,396.6" fill="#2a2c33"/><polygon points="1107.4,410.5 1113.5,406.7 1113.7,419.4 1107.6,423.3" fill="#2a2c33"/><polygon points="1107.9,436.8 1113.9,432.7 1114.1,444.6 1108.1,448.9" fill="#2a2c33"/><polygon points="1118.4,338.5 1124.6,335.5 1125.9,436.2 1119.9,440.5" fill="#53565f"/><polygon points="1118.6,348.3 1124.7,345.2 1124.9,359.0 1118.8,362.3" fill="#2a2c33"/><polygon points="1119.0,375.5 1125.1,372.0 1125.3,385.9 1119.2,389.5" fill="#2a2c33"/><polygon points="1119.4,403.0 1125.4,399.2 1125.6,411.6 1119.6,415.5" fill="#2a2c33"/><polygon points="1119.8,428.7 1125.8,424.6 1125.9,436.2 1119.9,440.5" fill="#2a2c33"/><polygon points="1129.7,333.1 1135.0,330.5 1136.2,428.9 1131.0,432.6" fill="#53565f"/><polygon points="1129.8,342.6 1135.2,340.0 1135.3,353.5 1130.0,356.3" fill="#2a2c33"/><polygon points="1130.2,369.2 1135.5,366.2 1135.6,379.7 1130.4,382.8" fill="#2a2c33"/><polygon points="1130.5,396.1 1135.8,392.8 1135.9,404.9 1130.7,408.3" fill="#2a2c33"/><polygon points="1130.8,421.1 1136.1,417.6 1136.2,428.9 1131.0,432.6" fill="#2a2c33"/><polygon points="1140.2,328.0 1145.5,325.5 1146.4,421.7 1141.2,425.4" fill="#53565f"/><polygon points="1140.3,337.4 1145.6,334.7 1145.7,347.9 1140.4,350.7" fill="#2a2c33"/><polygon points="1140.6,363.3 1145.9,360.4 1146.0,373.6 1140.7,376.7" fill="#2a2c33"/><polygon points="1140.8,389.6 1146.1,386.4 1146.2,398.2 1141.0,401.6" fill="#2a2c33"/><polygon points="1141.1,414.1 1146.3,410.6 1146.4,421.7 1141.2,425.4" fill="#2a2c33"/><polygon points="1148.9,323.9 1153.4,321.8 1154.1,416.3 1149.7,419.4" fill="#53565f"/><polygon points="1148.9,333.1 1153.4,330.8 1153.5,343.8 1149.0,346.2" fill="#2a2c33"/><polygon points="1149.2,358.5 1153.6,356.0 1153.7,369.0 1149.3,371.6" fill="#2a2c33"/><polygon points="1149.4,384.3 1153.8,381.6 1153.9,393.2 1149.5,396.0" fill="#2a2c33"/><polygon points="1149.6,408.4 1154.0,405.4 1154.1,416.3 1149.7,419.4" fill="#2a2c33"/><polygon points="1159.4,321.0 1165.5,318.0 1165.6,337.4 1159.5,340.6" fill="#2a2c33"/><polygon points="1159.5,345.8 1165.6,342.5 1165.7,361.9 1159.6,365.5" fill="#2a2c33"/><polygon points="1159.7,371.7 1165.7,368.0 1165.8,385.4 1159.8,389.3" fill="#2a2c33"/><polygon points="1159.8,395.6 1165.8,391.5 1165.9,407.9 1159.9,412.1" fill="#2a2c33"/><polygon points="1168.2,316.7 1173.3,314.2 1173.4,333.3 1168.2,336.0" fill="#2a2c33"/><polygon points="1168.3,341.1 1173.4,338.3 1173.4,357.3 1168.3,360.4" fill="#2a2c33"/><polygon points="1168.4,366.4 1173.5,363.4 1173.5,380.4 1168.4,383.7" fill="#2a2c33"/><polygon points="1168.5,389.8 1173.5,386.4 1173.6,402.5 1168.5,406.0" fill="#2a2c33"/><polygon points="1176.8,312.5 1181.1,310.4 1181.2,329.1 1176.8,331.4" fill="#2a2c33"/><polygon points="1176.9,336.4 1181.2,334.1 1181.2,352.8 1176.9,355.3" fill="#2a2c33"/><polygon points="1176.9,361.3 1181.2,358.7 1181.2,375.4 1176.9,378.2" fill="#2a2c33"/><polygon points="1176.9,384.1 1181.2,381.3 1181.2,397.1 1177.0,400.0" fill="#2a2c33"/><polygon points="1097.2,433.7 1120.0,419.0 1137.0,433.0 1125.0,442.5 1097.2,466.1" fill="#67666e"/><polygon points="1109.0,424.0 1119.3,420.5 1119.3,454.4 1109.0,456.0" fill="#5a5a60"/><polygon points="1120.0,420.0 1137.0,432.5 1137.0,429.3 1120.0,424.9" fill="#f08f58"/><path d="M988.6 472.6L1200.0 347.5" stroke="#f3f3f5" stroke-width="2.6"/><path d="M988.6 474.4L1200.0 349.3" stroke="#77777c" stroke-width="0.900"/><path d="M991.2 502.5L1200.0 366.0" stroke="#f3f3f5" stroke-width="2.6"/><path d="M991.2 504.3L1200.0 367.8" stroke="#77777c" stroke-width="0.900"/><polygon points="1148.0,403.5 1169.0,390.0 1171.0,392.5 1150.0,406.5" fill="#d8d8dc" stroke="#444" stroke-width="0.6" stroke-linejoin="round"/><polygon points="1012.0,489.0 1034.0,474.0 1036.0,477.0 1014.0,492.5" fill="#d8d8dc" stroke="#444" stroke-width="0.6" stroke-linejoin="round"/><polygon points="706.1,359.9 971.8,284.8 1082.6,302.3 1084.4,297.9 1101.8,291.8 1183.8,302.3 1017.2,379.9 1017.9,413.7 987.5,432.3" fill="#f9995f" stroke="#3a3432" stroke-width="0.8" stroke-linejoin="round"/><polygon points="725.0,365.0 970.5,291.5 1079.0,308.5 917.7,363.0 920.3,402.6 998.3,422.7 985.5,431.3" fill="#f1f3f9"/><clipPath id="lw"><polygon points="725.0,365.0 970.5,291.5 1079.0,308.5 917.7,363.0 920.3,402.6 998.3,422.7 985.5,431.3"/></clipPath><g clip-path="url(#lw)" stroke="#50525a" stroke-width="0.800" fill="none"><path d="M769.2 351.8l160 95"/><path d="M813.4 338.5l160 95"/><path d="M857.6 325.3l160 95"/><path d="M901.8 312.1l160 95"/><path d="M946.0 298.9l160 95"/><path d="M739.4 370.6L988.1 303.5"/><path d="M753.8 376.2L1005.7 315.5"/></g><polygon points="873.2,345.0 943.0,322.0 1070.0,301.0 1080.0,305.0 976.2,341.5 935.0,354.5 893.0,356.0" fill="#e9ebf0"/><polygon points="871.5,344.2 941.3,324.1 944.8,343.3 883.7,352.0" fill="#e4e6ec"/><rect x="877.8" y="345.0" width="3.200" height="4.7" fill="#3f424b"/><rect x="883.7" y="343.3" width="3.200" height="5.3" fill="#3f424b"/><rect x="889.6" y="341.6" width="3.200" height="5.9" fill="#3f424b"/><rect x="895.5" y="339.9" width="3.200" height="6.5" fill="#3f424b"/><rect x="901.4" y="338.3" width="3.200" height="7.0" fill="#3f424b"/><rect x="907.3" y="336.6" width="3.200" height="7.6" fill="#3f424b"/><rect x="913.2" y="334.9" width="3.200" height="8.2" fill="#3f424b"/><rect x="919.1" y="333.2" width="3.200" height="8.8" fill="#3f424b"/><rect x="925.0" y="331.5" width="3.200" height="9.4" fill="#3f424b"/><rect x="931.0" y="329.9" width="3.200" height="10.0" fill="#3f424b"/><rect x="936.9" y="328.2" width="3.200" height="10.6" fill="#3f424b"/><rect x="980.0" y="312.0" width="3" height="14" fill="#5a5d66" opacity="0.850"/><rect x="988.9" y="311.0" width="3" height="14" fill="#5a5d66" opacity="0.850"/><rect x="997.8" y="310.0" width="3" height="14" fill="#5a5d66" opacity="0.850"/><rect x="1006.7" y="309.0" width="3" height="14" fill="#5a5d66" opacity="0.850"/><rect x="1015.6" y="308.0" width="3" height="14" fill="#5a5d66" opacity="0.850"/><rect x="1024.4" y="307.0" width="3" height="14" fill="#5a5d66" opacity="0.850"/><rect x="1033.3" y="306.0" width="3" height="14" fill="#5a5d66" opacity="0.850"/><rect x="1042.2" y="305.0" width="3" height="14" fill="#5a5d66" opacity="0.850"/><rect x="1051.1" y="304.0" width="3" height="14" fill="#5a5d66" opacity="0.850"/><polygon points="916.8,307.5 934.3,302.3 971.0,309.3 972.7,337.2 956.0,343.3 922.0,339.8" fill="#f9995f" stroke="#3a3432" stroke-width="0.7" stroke-linejoin="round"/><polygon points="919.5,310.5 934.0,306.0 966.0,311.0 953.5,316.0" fill="#f1f3f9"/><polygon points="953.5,314.5 971.0,309.3 972.7,337.2 956.0,343.3" fill="#fba069" stroke="#3a3432" stroke-width="0.6" stroke-linejoin="round"/><polygon points="958.0,319.0 967.0,316.0 968.0,334.0 959.0,337.5" fill="#2a2c33"/><path d="M706.1 359.9L971.8 284.8" stroke="#3a3432" stroke-width="0.8"/><polygon points="917.7,359.0 1017.2,379.9 1183.8,302.3 1101.8,291.8 1084.4,297.9 1087.0,307.5 1065.2,304.9" fill="#f9995f" stroke="#3a3432" stroke-width="0.8" stroke-linejoin="round"/><polygon points="931.0,361.3 1016.5,379.0 1179.0,304.8 1103.6,298.8 1091.0,303.0 1092.0,314.0 1068.0,312.5 978.8,346.8" fill="#f1f3f9"/><polygon points="917.7,359.0 1017.2,379.9 1017.9,413.7 998.3,422.7 920.3,402.6" fill="#f9995f" stroke="#3a3432" stroke-width="0.8" stroke-linejoin="round"/><path d="M918.5 371.5L1018.3 392.5" stroke="#5a3a2a" stroke-width="0.7"/><polygon points="927.0,392.0 932.5,392.8 932.8,405.5 927.3,404.8" fill="#e9a888" stroke="#8a6a5a" stroke-width="0.5" stroke-linejoin="round"/><path d="M984.4 343.8L1044.1 366.4" stroke="#4e5056" stroke-width="0.9"/><path d="M1008.8 334.6L1071.8 353.8" stroke="#4e5056" stroke-width="0.9"/><path d="M1031.8 325.9L1097.8 341.9" stroke="#4e5056" stroke-width="0.9"/><path d="M1054.8 317.2L1123.8 330.0" stroke="#4e5056" stroke-width="0.9"/><path d="M1079.2 308.0L1151.4 317.4" stroke="#4e5056" stroke-width="0.9"/><path d="M973.8 370.1L1141.3 301.8" stroke="#4e5056" stroke-width="0.9"/><rect x="759.2" y="347.8" width="2.8" height="4.0" fill="#707274" opacity="0.79"/><rect x="759.7" y="346.7" width="2.5" height="3.7" fill="#707274" opacity="0.75"/><rect x="756.7" y="347.1" width="2.3" height="8.9" fill="#707274" opacity="0.64"/><rect x="758.2" y="353.5" width="3.5" height="7.3" fill="#707274" opacity="0.74"/><rect x="765.8" y="346.6" width="3.3" height="5.4" fill="#707274" opacity="0.65"/><rect x="757.2" y="349.7" width="3.2" height="4.7" fill="#707274" opacity="0.80"/><rect x="762.4" y="350.5" width="2.6" height="3.9" fill="#707274" opacity="0.62"/><rect x="758.1" y="354.2" width="2.3" height="5.5" fill="#707274" opacity="0.80"/><rect x="760.5" y="349.6" width="3.1" height="8.0" fill="#707274" opacity="0.69"/><rect x="761.7" y="352.3" width="3.3" height="8.2" fill="#707274" opacity="0.70"/><rect x="784.8" y="350.2" width="2.3" height="8.4" fill="#707274" opacity="0.65"/><rect x="780.9" y="349.4" width="2.9" height="8.5" fill="#707274" opacity="0.80"/><rect x="784.0" y="352.1" width="2.9" height="7.4" fill="#707274" opacity="0.80"/><rect x="780.6" y="357.4" width="3.5" height="6.6" fill="#707274" opacity="0.83"/><rect x="777.5" y="356.0" width="2.8" height="10.0" fill="#707274" opacity="0.89"/><rect x="779.3" y="352.9" width="2.9" height="3.6" fill="#707274" opacity="0.76"/><rect x="778.3" y="350.2" width="1.5" height="8.5" fill="#707274" opacity="0.65"/><rect x="779.0" y="352.9" width="3.3" height="4.0" fill="#707274" opacity="0.76"/><rect x="813.5" y="353.9" width="3.2" height="9.1" fill="#707274" opacity="0.70"/><rect x="812.2" y="344.5" width="3.3" height="9.7" fill="#707274" opacity="0.65"/><rect x="809.8" y="342.2" width="1.9" height="6.7" fill="#707274" opacity="0.81"/><rect x="810.6" y="338.1" width="2.3" height="5.9" fill="#707274" opacity="0.80"/><rect x="817.5" y="350.4" width="2.5" height="7.5" fill="#707274" opacity="0.84"/><rect x="808.5" y="354.2" width="3.1" height="9.2" fill="#707274" opacity="0.88"/><rect x="811.9" y="345.2" width="1.6" height="7.6" fill="#707274" opacity="0.62"/><rect x="808.7" y="341.8" width="1.8" height="5.7" fill="#707274" opacity="0.62"/><rect x="808.0" y="340.7" width="1.6" height="5.9" fill="#707274" opacity="0.61"/><rect x="816.7" y="349.1" width="1.7" height="5.1" fill="#707274" opacity="0.72"/><rect x="811.6" y="340.2" width="3.3" height="10.0" fill="#707274" opacity="0.76"/><rect x="812.8" y="339.5" width="1.6" height="5.7" fill="#707274" opacity="0.69"/><rect x="816.3" y="340.9" width="1.5" height="9.7" fill="#707274" opacity="0.78"/><rect x="809.5" y="347.8" width="1.5" height="6.9" fill="#707274" opacity="0.94"/><rect x="818.9" y="368.0" width="2.0" height="5.9" fill="#707274" opacity="0.66"/><rect x="818.2" y="366.3" width="3.1" height="5.6" fill="#707274" opacity="0.68"/><rect x="818.5" y="370.8" width="3.3" height="8.7" fill="#707274" opacity="0.89"/><rect x="817.9" y="363.3" width="2.5" height="5.8" fill="#707274" opacity="0.61"/><rect x="812.2" y="363.8" width="2.0" height="8.0" fill="#707274" opacity="0.93"/><rect x="815.6" y="370.4" width="3.6" height="9.7" fill="#707274" opacity="0.73"/><rect x="813.8" y="363.3" width="1.8" height="4.8" fill="#707274" opacity="0.82"/><rect x="819.2" y="369.4" width="2.5" height="7.7" fill="#707274" opacity="0.88"/><rect x="824.7" y="343.3" width="3.4" height="8.6" fill="#707274" opacity="0.86"/><rect x="827.8" y="339.4" width="3.1" height="5.7" fill="#707274" opacity="0.88"/><rect x="831.8" y="341.2" width="2.3" height="9.7" fill="#707274" opacity="0.85"/><rect x="825.4" y="339.0" width="1.7" height="9.4" fill="#707274" opacity="0.88"/><rect x="825.2" y="344.6" width="3.6" height="7.8" fill="#707274" opacity="0.72"/><rect x="828.4" y="339.0" width="1.4" height="9.8" fill="#707274" opacity="0.83"/><rect x="828.2" y="345.5" width="2.4" height="9.2" fill="#707274" opacity="0.89"/><rect x="825.7" y="340.0" width="2.0" height="5.1" fill="#707274" opacity="0.81"/><rect x="842.1" y="343.2" width="1.7" height="9.4" fill="#707274" opacity="0.72"/><rect x="843.7" y="344.8" width="3.4" height="6.2" fill="#707274" opacity="0.92"/><rect x="844.0" y="344.3" width="2.6" height="3.6" fill="#707274" opacity="0.75"/><rect x="841.5" y="339.0" width="3.2" height="4.6" fill="#707274" opacity="0.77"/><rect x="845.8" y="344.6" width="2.1" height="6.9" fill="#707274" opacity="0.79"/><rect x="846.3" y="340.1" width="2.6" height="5.1" fill="#707274" opacity="0.70"/><rect x="846.2" y="344.1" width="2.6" height="8.4" fill="#707274" opacity="0.92"/><rect x="843.5" y="345.1" width="2.5" height="6.8" fill="#707274" opacity="0.84"/><rect x="865.3" y="330.4" width="2.5" height="9.6" fill="#707274" opacity="0.84"/><rect x="871.3" y="335.3" width="2.0" height="7.1" fill="#707274" opacity="0.93"/><rect x="870.8" y="325.6" width="1.7" height="6.4" fill="#707274" opacity="0.63"/><rect x="862.4" y="324.9" width="2.9" height="8.6" fill="#707274" opacity="0.91"/><rect x="861.2" y="332.6" width="2.9" height="4.4" fill="#707274" opacity="0.91"/><rect x="872.5" y="326.6" width="3.5" height="6.1" fill="#707274" opacity="0.77"/><rect x="872.9" y="334.0" width="1.8" height="6.3" fill="#707274" opacity="0.78"/><rect x="863.7" y="326.3" width="2.1" height="8.2" fill="#707274" opacity="0.61"/><rect x="866.8" y="329.3" width="1.4" height="5.7" fill="#707274" opacity="0.82"/><rect x="866.2" y="324.8" width="3.6" height="8.6" fill="#707274" opacity="0.94"/><rect x="860.5" y="327.2" width="1.5" height="8.6" fill="#707274" opacity="0.69"/><rect x="860.8" y="329.1" width="3.4" height="8.8" fill="#707274" opacity="0.69"/><rect x="843.5" y="378.0" width="2.7" height="8.1" fill="#707274" opacity="0.63"/><rect x="842.6" y="375.3" width="2.3" height="4.0" fill="#707274" opacity="0.93"/><rect x="848.3" y="376.6" width="1.6" height="9.1" fill="#707274" opacity="0.62"/><rect x="850.6" y="372.4" width="2.1" height="7.1" fill="#707274" opacity="0.92"/><rect x="844.7" y="368.6" width="2.6" height="5.0" fill="#707274" opacity="0.64"/><rect x="843.6" y="367.6" width="1.8" height="5.5" fill="#707274" opacity="0.71"/><rect x="849.6" y="370.5" width="2.5" height="4.7" fill="#707274" opacity="0.72"/><rect x="842.2" y="370.0" width="1.4" height="8.3" fill="#707274" opacity="0.79"/><rect x="843.9" y="372.7" width="3.5" height="4.2" fill="#707274" opacity="0.89"/><rect x="846.3" y="372.9" width="3.2" height="6.1" fill="#707274" opacity="0.78"/><rect x="871.0" y="371.6" width="2.2" height="8.9" fill="#707274" opacity="0.85"/><rect x="870.2" y="357.7" width="2.2" height="3.9" fill="#707274" opacity="0.65"/><rect x="861.1" y="365.8" width="2.0" height="4.6" fill="#707274" opacity="0.63"/><rect x="873.5" y="368.9" width="2.9" height="5.3" fill="#707274" opacity="0.68"/><rect x="864.7" y="359.0" width="1.7" height="6.4" fill="#707274" opacity="0.69"/><rect x="875.4" y="371.3" width="2.6" height="5.1" fill="#707274" opacity="0.94"/><rect x="865.0" y="356.6" width="1.4" height="6.0" fill="#707274" opacity="0.77"/><rect x="868.0" y="352.8" width="2.5" height="3.5" fill="#707274" opacity="0.69"/><rect x="861.4" y="357.6" width="1.5" height="3.6" fill="#707274" opacity="0.71"/><rect x="863.7" y="362.1" width="2.6" height="8.4" fill="#707274" opacity="0.83"/><rect x="871.5" y="369.1" width="2.3" height="5.6" fill="#707274" opacity="0.94"/><rect x="862.4" y="365.4" width="2.8" height="3.8" fill="#707274" opacity="0.89"/><rect x="874.3" y="363.1" width="3.0" height="8.8" fill="#707274" opacity="0.65"/><rect x="868.4" y="360.1" width="3.2" height="8.7" fill="#707274" opacity="0.89"/><rect x="869.3" y="369.4" width="2.9" height="8.0" fill="#707274" opacity="0.68"/><rect x="860.5" y="351.2" width="2.2" height="4.2" fill="#707274" opacity="0.89"/><rect x="868.9" y="363.1" width="2.8" height="7.9" fill="#707274" opacity="0.77"/><rect x="860.1" y="367.1" width="3.0" height="6.8" fill="#707274" opacity="0.79"/><rect x="870.5" y="349.6" width="3.0" height="5.1" fill="#707274" opacity="0.63"/><rect x="864.2" y="365.5" width="1.9" height="8.3" fill="#707274" opacity="0.94"/><rect x="896.0" y="368.1" width="2.5" height="7.9" fill="#707274" opacity="0.87"/><rect x="896.9" y="372.3" width="1.6" height="4.5" fill="#707274" opacity="0.69"/><rect x="897.9" y="366.9" width="2.6" height="3.6" fill="#707274" opacity="0.62"/><rect x="894.2" y="372.8" width="2.9" height="7.9" fill="#707274" opacity="0.70"/><rect x="896.1" y="369.4" width="2.4" height="4.3" fill="#707274" opacity="0.91"/><rect x="893.6" y="377.7" width="3.5" height="3.6" fill="#707274" opacity="0.76"/><rect x="898.6" y="377.5" width="2.4" height="5.2" fill="#707274" opacity="0.67"/><rect x="899.6" y="365.4" width="2.7" height="4.4" fill="#707274" opacity="0.78"/><rect x="899.6" y="364.1" width="3.2" height="6.8" fill="#707274" opacity="0.91"/><rect x="897.6" y="365.7" width="3.4" height="6.7" fill="#707274" opacity="0.61"/><rect x="908.0" y="316.0" width="2.4" height="5.5" fill="#707274" opacity="0.65"/><rect x="910.8" y="314.9" width="3.2" height="3.5" fill="#707274" opacity="0.86"/><rect x="914.7" y="313.7" width="3.4" height="8.1" fill="#707274" opacity="0.92"/><rect x="910.3" y="315.2" width="2.3" height="10.0" fill="#707274" opacity="0.81"/><rect x="910.9" y="315.6" width="2.0" height="3.8" fill="#707274" opacity="0.64"/><rect x="914.7" y="314.7" width="3.5" height="5.1" fill="#707274" opacity="0.69"/><rect x="912.1" y="314.1" width="2.2" height="9.7" fill="#707274" opacity="0.91"/><rect x="914.5" y="316.8" width="3.4" height="9.6" fill="#707274" opacity="0.79"/><rect x="767.6" y="345.5" width="3.0" height="6.4" fill="#707274" opacity="0.86"/><rect x="766.7" y="347.9" width="1.5" height="9.5" fill="#707274" opacity="0.64"/><rect x="764.7" y="348.4" width="2.1" height="8.3" fill="#707274" opacity="0.94"/><rect x="762.1" y="351.6" width="2.1" height="7.1" fill="#707274" opacity="0.74"/><rect x="761.0" y="346.6" width="1.9" height="9.4" fill="#707274" opacity="0.77"/><rect x="761.6" y="354.1" width="3.6" height="6.4" fill="#707274" opacity="0.65"/><rect x="761.3" y="345.9" width="2.2" height="4.1" fill="#707274" opacity="0.68"/><rect x="762.1" y="350.7" width="3.4" height="8.4" fill="#707274" opacity="0.74"/><rect x="764.0" y="350.2" width="2.2" height="5.7" fill="#707274" opacity="0.62"/><rect x="762.3" y="354.7" width="1.7" height="6.8" fill="#707274" opacity="0.82"/><rect x="769.4" y="347.2" width="2.0" height="5.1" fill="#707274" opacity="0.74"/><rect x="764.4" y="354.5" width="3.3" height="9.2" fill="#707274" opacity="0.61"/><rect x="759.4" y="352.1" width="3.4" height="6.6" fill="#707274" opacity="0.81"/><rect x="759.0" y="348.9" width="3.4" height="8.9" fill="#707274" opacity="0.90"/><rect x="794.7" y="343.5" width="1.6" height="4.5" fill="#707274" opacity="0.78"/><rect x="791.8" y="350.4" width="3.0" height="7.7" fill="#707274" opacity="0.87"/><rect x="789.6" y="346.5" width="1.5" height="8.6" fill="#707274" opacity="0.68"/><rect x="794.2" y="347.5" width="2.1" height="4.3" fill="#707274" opacity="0.69"/><rect x="791.4" y="348.0" width="1.6" height="4.0" fill="#707274" opacity="0.78"/><rect x="790.8" y="344.9" width="1.9" height="7.4" fill="#707274" opacity="0.60"/><rect x="788.0" y="345.6" width="3.5" height="7.7" fill="#707274" opacity="0.91"/><rect x="789.8" y="343.3" width="1.9" height="9.7" fill="#707274" opacity="0.85"/><rect x="788.1" y="341.2" width="2.5" height="7.9" fill="#707274" opacity="0.75"/><rect x="787.6" y="347.7" width="3.4" height="5.0" fill="#707274" opacity="0.61"/><rect x="809.7" y="338.7" width="2.9" height="4.8" fill="#707274" opacity="0.88"/><rect x="815.3" y="340.1" width="1.9" height="9.8" fill="#707274" opacity="0.71"/><rect x="816.5" y="335.7" width="1.9" height="8.4" fill="#707274" opacity="0.70"/><rect x="818.3" y="339.9" width="1.8" height="5.0" fill="#707274" opacity="0.75"/><rect x="814.3" y="347.2" width="1.7" height="6.1" fill="#707274" opacity="0.67"/><rect x="818.6" y="334.3" width="1.5" height="3.9" fill="#707274" opacity="0.74"/><rect x="817.6" y="346.1" width="3.0" height="10.0" fill="#707274" opacity="0.93"/><rect x="809.6" y="335.0" width="3.5" height="8.4" fill="#707274" opacity="0.61"/><rect x="814.3" y="338.1" width="2.2" height="5.7" fill="#707274" opacity="0.66"/><rect x="805.0" y="336.5" width="2.2" height="9.7" fill="#707274" opacity="0.64"/><rect x="818.5" y="335.3" width="2.2" height="8.8" fill="#707274" opacity="0.89"/><rect x="811.1" y="332.8" width="2.4" height="5.9" fill="#707274" opacity="0.92"/><rect x="807.7" y="337.8" width="3.4" height="3.7" fill="#707274" opacity="0.74"/><rect x="816.4" y="344.3" width="1.5" height="3.7" fill="#707274" opacity="0.62"/><rect x="817.9" y="336.1" width="3.0" height="9.3" fill="#707274" opacity="0.72"/><rect x="808.8" y="347.3" width="2.8" height="5.2" fill="#707274" opacity="0.85"/><rect x="809.4" y="336.4" width="1.4" height="8.4" fill="#707274" opacity="0.92"/><rect x="813.9" y="347.1" width="1.5" height="5.0" fill="#707274" opacity="0.77"/><rect x="818.4" y="347.3" width="2.3" height="5.1" fill="#707274" opacity="0.75"/><rect x="811.9" y="346.8" width="1.8" height="8.7" fill="#707274" opacity="0.86"/><rect x="827.2" y="355.3" width="2.7" height="5.6" fill="#707274" opacity="0.71"/><rect x="819.8" y="355.4" width="1.6" height="4.8" fill="#707274" opacity="0.86"/><rect x="818.0" y="346.8" width="1.5" height="7.1" fill="#707274" opacity="0.71"/><rect x="829.7" y="356.6" width="3.6" height="5.2" fill="#707274" opacity="0.63"/><rect x="815.5" y="352.0" width="3.0" height="6.4" fill="#707274" opacity="0.68"/><rect x="820.7" y="353.4" width="2.9" height="8.4" fill="#707274" opacity="0.90"/><rect x="824.6" y="347.5" width="3.2" height="5.4" fill="#707274" opacity="0.80"/><rect x="820.0" y="354.9" width="1.8" height="5.1" fill="#707274" opacity="0.69"/><rect x="816.5" y="356.6" width="2.7" height="5.6" fill="#707274" opacity="0.74"/><rect x="829.9" y="352.1" width="1.9" height="8.8" fill="#707274" opacity="0.83"/><rect x="829.9" y="347.2" width="2.4" height="8.8" fill="#707274" opacity="0.89"/><rect x="828.6" y="346.5" width="2.0" height="4.3" fill="#707274" opacity="0.67"/><rect x="829.6" y="353.0" width="3.4" height="5.9" fill="#707274" opacity="0.90"/><rect x="821.2" y="349.1" width="3.1" height="9.6" fill="#707274" opacity="0.64"/><rect x="847.2" y="351.4" width="1.9" height="5.9" fill="#707274" opacity="0.65"/><rect x="842.4" y="347.1" width="2.7" height="7.7" fill="#707274" opacity="0.67"/><rect x="840.1" y="347.9" width="2.9" height="4.7" fill="#707274" opacity="0.71"/><rect x="842.4" y="353.5" width="2.6" height="3.9" fill="#707274" opacity="0.64"/><rect x="844.7" y="350.6" width="2.8" height="4.1" fill="#707274" opacity="0.66"/><rect x="848.3" y="348.9" width="2.0" height="5.5" fill="#707274" opacity="0.93"/><rect x="843.7" y="350.8" width="2.2" height="6.2" fill="#707274" opacity="0.90"/><rect x="852.0" y="348.4" width="1.8" height="8.2" fill="#707274" opacity="0.67"/><rect x="840.1" y="354.8" width="2.3" height="8.8" fill="#707274" opacity="0.74"/><rect x="850.6" y="349.5" width="1.8" height="3.6" fill="#707274" opacity="0.79"/><rect x="847.7" y="354.9" width="1.6" height="7.5" fill="#707274" opacity="0.73"/><rect x="846.1" y="345.8" width="2.0" height="6.9" fill="#707274" opacity="0.92"/><rect x="853.0" y="337.8" width="3.2" height="9.8" fill="#707274" opacity="0.67"/><rect x="853.3" y="346.0" width="3.5" height="6.6" fill="#707274" opacity="0.62"/><rect x="867.7" y="336.0" width="3.4" height="7.5" fill="#707274" opacity="0.89"/><rect x="853.9" y="343.1" width="1.9" height="6.1" fill="#707274" opacity="0.90"/><rect x="865.9" y="332.3" width="1.9" height="6.1" fill="#707274" opacity="0.78"/><rect x="857.9" y="331.2" width="1.9" height="8.2" fill="#707274" opacity="0.91"/><rect x="851.7" y="339.1" width="3.1" height="3.7" fill="#707274" opacity="0.89"/><rect x="853.1" y="339.8" width="2.6" height="7.6" fill="#707274" opacity="0.71"/><rect x="858.6" y="339.5" width="2.3" height="7.8" fill="#707274" opacity="0.76"/><rect x="858.9" y="329.4" width="2.8" height="6.7" fill="#707274" opacity="0.68"/><rect x="864.7" y="343.0" width="2.4" height="4.7" fill="#707274" opacity="0.77"/><rect x="852.9" y="331.3" width="2.3" height="4.1" fill="#707274" opacity="0.75"/><rect x="860.2" y="329.7" width="2.8" height="4.0" fill="#707274" opacity="0.86"/><rect x="865.0" y="338.2" width="1.5" height="6.8" fill="#707274" opacity="0.73"/><rect x="868.1" y="331.5" width="3.3" height="10.0" fill="#707274" opacity="0.86"/><rect x="865.7" y="332.5" width="3.6" height="6.7" fill="#707274" opacity="0.93"/><rect x="867.5" y="332.0" width="3.1" height="9.5" fill="#707274" opacity="0.62"/><rect x="857.3" y="342.6" width="1.7" height="9.3" fill="#707274" opacity="0.70"/><rect x="865.7" y="331.6" width="2.5" height="9.5" fill="#707274" opacity="0.67"/><rect x="855.7" y="338.1" width="2.1" height="3.7" fill="#707274" opacity="0.66"/><rect x="853.9" y="345.9" width="2.9" height="9.3" fill="#707274" opacity="0.66"/><rect x="865.1" y="331.1" width="2.6" height="7.6" fill="#707274" opacity="0.73"/><rect x="878.7" y="353.0" width="2.7" height="9.2" fill="#707274" opacity="0.64"/><rect x="880.9" y="354.3" width="2.3" height="8.7" fill="#707274" opacity="0.69"/><rect x="880.8" y="353.4" width="2.2" height="8.5" fill="#707274" opacity="0.75"/><rect x="866.2" y="356.4" width="1.5" height="8.8" fill="#707274" opacity="0.69"/><rect x="874.5" y="360.7" width="2.7" height="7.8" fill="#707274" opacity="0.71"/><rect x="863.0" y="343.6" width="1.7" height="7.5" fill="#707274" opacity="0.75"/><rect x="872.2" y="359.1" width="1.7" height="5.0" fill="#707274" opacity="0.83"/><rect x="863.4" y="343.0" width="2.2" height="4.2" fill="#707274" opacity="0.73"/><rect x="867.0" y="353.5" width="2.7" height="4.8" fill="#707274" opacity="0.82"/><rect x="871.5" y="345.4" width="3.5" height="5.1" fill="#707274" opacity="0.65"/><rect x="864.7" y="354.5" width="3.3" height="8.6" fill="#707274" opacity="0.74"/><rect x="867.8" y="343.2" width="2.8" height="7.2" fill="#707274" opacity="0.72"/><rect x="874.6" y="351.0" width="3.5" height="8.3" fill="#707274" opacity="0.69"/><rect x="879.3" y="343.8" width="2.6" height="6.1" fill="#707274" opacity="0.68"/><rect x="864.1" y="357.0" width="1.4" height="7.1" fill="#707274" opacity="0.93"/><rect x="865.6" y="346.6" width="2.7" height="6.8" fill="#707274" opacity="0.82"/><rect x="877.6" y="346.1" width="2.1" height="5.5" fill="#707274" opacity="0.62"/><rect x="879.0" y="357.1" width="3.0" height="3.5" fill="#707274" opacity="0.90"/><rect x="876.4" y="351.4" width="3.0" height="6.4" fill="#707274" opacity="0.68"/><rect x="864.9" y="347.2" width="1.5" height="5.7" fill="#707274" opacity="0.86"/><rect x="875.5" y="358.2" width="3.0" height="5.2" fill="#707274" opacity="0.79"/><rect x="870.8" y="357.2" width="2.6" height="5.2" fill="#707274" opacity="0.82"/><rect x="889.6" y="340.6" width="3.3" height="3.6" fill="#707274" opacity="0.69"/><rect x="880.8" y="346.9" width="3.5" height="8.3" fill="#707274" opacity="0.71"/><rect x="888.6" y="341.9" width="1.9" height="9.4" fill="#707274" opacity="0.82"/><rect x="886.3" y="346.0" width="3.6" height="6.6" fill="#707274" opacity="0.89"/><rect x="886.4" y="348.3" width="2.4" height="8.2" fill="#707274" opacity="0.80"/><rect x="881.7" y="340.5" width="2.8" height="4.0" fill="#707274" opacity="0.92"/><rect x="879.7" y="338.3" width="1.6" height="9.5" fill="#707274" opacity="0.72"/><rect x="879.7" y="338.3" width="1.5" height="8.0" fill="#707274" opacity="0.82"/><rect x="886.4" y="346.8" width="1.5" height="7.3" fill="#707274" opacity="0.73"/><rect x="887.8" y="347.8" width="3.4" height="3.9" fill="#707274" opacity="0.90"/><rect x="889.0" y="349.3" width="1.6" height="4.8" fill="#707274" opacity="0.64"/><rect x="878.4" y="348.2" width="3.2" height="7.6" fill="#707274" opacity="0.89"/><rect x="851.6" y="320.3" width="1.6" height="4.1" fill="#707274" opacity="0.87"/><rect x="846.5" y="320.6" width="2.3" height="3.6" fill="#707274" opacity="0.69"/><rect x="847.4" y="323.7" width="2.2" height="5.6" fill="#707274" opacity="0.94"/><rect x="850.0" y="324.8" width="2.8" height="3.7" fill="#707274" opacity="0.74"/><rect x="849.2" y="324.2" width="2.2" height="8.1" fill="#707274" opacity="0.79"/><rect x="846.6" y="324.9" width="1.6" height="8.8" fill="#707274" opacity="0.66"/><rect x="844.0" y="319.6" width="3.1" height="9.9" fill="#707274" opacity="0.60"/><rect x="849.9" y="321.9" width="3.2" height="4.7" fill="#707274" opacity="0.77"/><rect x="848.2" y="324.7" width="2.0" height="9.6" fill="#707274" opacity="0.70"/><rect x="846.6" y="323.6" width="2.5" height="4.2" fill="#707274" opacity="0.82"/><rect x="900.0" y="302.3" width="2.9" height="8.6" fill="#707274" opacity="0.82"/><rect x="903.3" y="299.2" width="2.3" height="9.3" fill="#707274" opacity="0.63"/><rect x="909.7" y="296.2" width="1.9" height="5.2" fill="#707274" opacity="0.92"/><rect x="905.0" y="299.0" width="3.3" height="5.0" fill="#707274" opacity="0.76"/><rect x="905.4" y="302.0" width="3.1" height="7.7" fill="#707274" opacity="0.72"/><rect x="902.9" y="297.2" width="3.3" height="7.8" fill="#707274" opacity="0.86"/><rect x="901.0" y="299.5" width="3.1" height="7.3" fill="#707274" opacity="0.64"/><rect x="904.5" y="303.1" width="1.9" height="4.7" fill="#707274" opacity="0.71"/><rect x="907.4" y="302.7" width="1.7" height="4.5" fill="#707274" opacity="0.69"/><rect x="902.9" y="300.2" width="1.8" height="5.6" fill="#707274" opacity="0.67"/><rect x="896.8" y="360.7" width="1.6" height="9.8" fill="#707274" opacity="0.64"/><rect x="892.1" y="363.8" width="3.1" height="8.3" fill="#707274" opacity="0.75"/><rect x="890.6" y="359.7" width="1.6" height="4.8" fill="#707274" opacity="0.74"/><rect x="889.3" y="356.8" width="3.1" height="8.0" fill="#707274" opacity="0.78"/><rect x="894.1" y="357.6" width="1.7" height="7.4" fill="#707274" opacity="0.74"/><rect x="894.9" y="362.9" width="2.3" height="7.2" fill="#707274" opacity="0.86"/><rect x="892.4" y="354.7" width="3.0" height="9.2" fill="#707274" opacity="0.87"/><rect x="894.6" y="362.2" width="2.9" height="7.7" fill="#707274" opacity="0.76"/><rect x="891.5" y="359.5" width="1.6" height="6.2" fill="#707274" opacity="0.87"/><rect x="894.7" y="359.6" width="2.0" height="6.3" fill="#707274" opacity="0.76"/><rect x="763.7" y="350.9" width="2.9" height="9.5" fill="#707274" opacity="0.66"/><rect x="764.2" y="355.3" width="2.3" height="6.7" fill="#707274" opacity="0.94"/><rect x="755.5" y="352.5" width="1.8" height="8.6" fill="#707274" opacity="0.93"/><rect x="762.3" y="347.2" width="2.7" height="7.0" fill="#707274" opacity="0.85"/><rect x="762.2" y="353.7" width="3.2" height="6.9" fill="#707274" opacity="0.74"/><rect x="768.3" y="348.5" width="2.9" height="6.1" fill="#707274" opacity="0.87"/><rect x="756.7" y="357.8" width="2.2" height="3.9" fill="#707274" opacity="0.70"/><rect x="760.6" y="346.2" width="2.3" height="6.2" fill="#707274" opacity="0.84"/><rect x="759.9" y="349.2" width="1.9" height="8.3" fill="#707274" opacity="0.93"/><rect x="762.4" y="348.6" width="3.2" height="6.0" fill="#707274" opacity="0.67"/><rect x="777.3" y="350.8" width="3.2" height="7.6" fill="#707274" opacity="0.76"/><rect x="781.6" y="345.3" width="3.5" height="5.8" fill="#707274" opacity="0.82"/><rect x="784.2" y="351.2" width="2.4" height="5.4" fill="#707274" opacity="0.79"/><rect x="777.3" y="351.3" width="2.2" height="9.0" fill="#707274" opacity="0.69"/><rect x="779.8" y="345.5" width="2.3" height="4.7" fill="#707274" opacity="0.60"/><rect x="783.2" y="345.8" width="1.9" height="5.5" fill="#707274" opacity="0.77"/><rect x="780.3" y="349.4" width="2.9" height="5.9" fill="#707274" opacity="0.93"/><rect x="784.5" y="343.6" width="3.2" height="9.4" fill="#707274" opacity="0.87"/><rect x="809.2" y="350.0" width="2.8" height="3.6" fill="#707274" opacity="0.60"/><rect x="822.2" y="346.8" width="2.0" height="4.2" fill="#707274" opacity="0.65"/><rect x="810.7" y="349.0" width="2.2" height="4.5" fill="#707274" opacity="0.92"/><rect x="819.7" y="338.0" width="3.4" height="7.5" fill="#707274" opacity="0.87"/><rect x="817.7" y="351.1" width="3.1" height="9.0" fill="#707274" opacity="0.67"/><rect x="818.1" y="344.6" width="3.0" height="6.4" fill="#707274" opacity="0.91"/><rect x="815.9" y="339.8" width="1.9" height="4.4" fill="#707274" opacity="0.77"/><rect x="807.9" y="343.4" width="1.7" height="6.7" fill="#707274" opacity="0.77"/><rect x="815.6" y="350.5" width="1.4" height="9.0" fill="#707274" opacity="0.76"/><rect x="816.0" y="347.0" width="3.2" height="5.9" fill="#707274" opacity="0.75"/><rect x="822.4" y="336.4" width="2.8" height="7.6" fill="#707274" opacity="0.61"/><rect x="816.8" y="347.3" width="3.4" height="5.6" fill="#707274" opacity="0.94"/><rect x="815.2" y="343.7" width="3.4" height="3.7" fill="#707274" opacity="0.85"/><rect x="817.0" y="341.1" width="3.3" height="5.9" fill="#707274" opacity="0.77"/><rect x="838.3" y="355.8" width="1.9" height="6.3" fill="#707274" opacity="0.75"/><rect x="838.6" y="356.6" width="2.0" height="8.9" fill="#707274" opacity="0.74"/><rect x="838.0" y="348.8" width="2.5" height="9.8" fill="#707274" opacity="0.83"/><rect x="841.5" y="349.6" width="2.1" height="5.4" fill="#707274" opacity="0.81"/><rect x="839.6" y="356.0" width="1.5" height="8.2" fill="#707274" opacity="0.91"/><rect x="838.5" y="345.7" width="2.1" height="3.5" fill="#707274" opacity="0.67"/><rect x="843.1" y="353.5" width="2.8" height="8.6" fill="#707274" opacity="0.92"/><rect x="839.3" y="353.6" width="2.8" height="8.0" fill="#707274" opacity="0.81"/><rect x="861.3" y="326.0" width="2.9" height="6.5" fill="#707274" opacity="0.87"/><rect x="850.8" y="325.5" width="1.5" height="8.5" fill="#707274" opacity="0.92"/><rect x="860.8" y="328.2" width="3.2" height="8.6" fill="#707274" opacity="0.80"/><rect x="853.6" y="327.2" width="2.3" height="5.6" fill="#707274" opacity="0.75"/><rect x="860.6" y="336.1" width="1.5" height="7.2" fill="#707274" opacity="0.61"/><rect x="851.1" y="334.3" width="2.7" height="9.5" fill="#707274" opacity="0.76"/><rect x="849.3" y="328.4" width="2.7" height="9.6" fill="#707274" opacity="0.94"/><rect x="857.6" y="328.8" width="1.6" height="7.7" fill="#707274" opacity="0.67"/><rect x="851.7" y="323.2" width="1.4" height="7.9" fill="#707274" opacity="0.64"/><rect x="866.4" y="324.2" width="3.3" height="4.3" fill="#707274" opacity="0.61"/><rect x="861.9" y="326.4" width="3.0" height="4.7" fill="#707274" opacity="0.62"/><rect x="862.9" y="333.0" width="3.3" height="8.2" fill="#707274" opacity="0.63"/><rect x="868.6" y="356.2" width="2.4" height="9.6" fill="#707274" opacity="0.69"/><rect x="875.3" y="356.3" width="1.4" height="3.6" fill="#707274" opacity="0.83"/><rect x="872.3" y="343.6" width="2.1" height="8.2" fill="#707274" opacity="0.66"/><rect x="873.2" y="351.7" width="1.5" height="5.9" fill="#707274" opacity="0.80"/><rect x="864.8" y="355.5" width="1.7" height="8.7" fill="#707274" opacity="0.73"/><rect x="868.9" y="354.6" width="2.3" height="6.0" fill="#707274" opacity="0.88"/><rect x="874.9" y="357.7" width="2.6" height="5.4" fill="#707274" opacity="0.62"/><rect x="875.5" y="356.1" width="3.2" height="5.7" fill="#707274" opacity="0.81"/><rect x="875.5" y="358.6" width="2.7" height="5.5" fill="#707274" opacity="0.75"/><rect x="873.8" y="349.5" width="2.9" height="7.4" fill="#707274" opacity="0.91"/><rect x="872.1" y="347.7" width="1.4" height="5.2" fill="#707274" opacity="0.75"/><rect x="867.7" y="358.3" width="3.4" height="3.8" fill="#707274" opacity="0.89"/><rect x="872.2" y="359.3" width="2.7" height="5.3" fill="#707274" opacity="0.90"/><rect x="872.1" y="355.7" width="3.4" height="5.8" fill="#707274" opacity="0.63"/><rect x="867.1" y="357.9" width="1.8" height="8.4" fill="#707274" opacity="0.93"/><rect x="860.7" y="354.1" width="2.9" height="6.5" fill="#707274" opacity="0.67"/><rect x="891.0" y="371.0" width="3.1" height="6.5" fill="#707274" opacity="0.63"/><rect x="895.5" y="371.3" width="1.9" height="7.3" fill="#707274" opacity="0.91"/><rect x="896.1" y="368.3" width="2.4" height="7.3" fill="#707274" opacity="0.67"/><rect x="890.5" y="364.2" width="2.9" height="5.9" fill="#707274" opacity="0.80"/><rect x="892.2" y="368.2" width="1.7" height="3.8" fill="#707274" opacity="0.95"/><rect x="892.0" y="363.3" width="2.8" height="8.6" fill="#707274" opacity="0.65"/><rect x="893.8" y="366.1" width="2.5" height="3.6" fill="#707274" opacity="0.61"/><rect x="896.9" y="372.4" width="2.5" height="7.2" fill="#707274" opacity="0.69"/><rect x="905.8" y="399.6" width="3.5" height="8.5" fill="#707274" opacity="0.89"/><rect x="907.6" y="398.5" width="1.5" height="4.8" fill="#707274" opacity="0.66"/><rect x="898.8" y="397.3" width="2.6" height="9.2" fill="#707274" opacity="0.76"/><rect x="907.5" y="402.5" width="1.5" height="7.4" fill="#707274" opacity="0.74"/><rect x="899.2" y="402.8" width="2.0" height="7.2" fill="#707274" opacity="0.82"/><rect x="907.6" y="401.0" width="2.3" height="6.4" fill="#707274" opacity="0.66"/><rect x="965.5" y="299.9" width="1.9" height="3.8" fill="#707274" opacity="0.69"/><rect x="955.6" y="299.0" width="3.4" height="8.9" fill="#707274" opacity="0.62"/><rect x="962.6" y="297.1" width="2.8" height="9.9" fill="#707274" opacity="0.62"/><rect x="952.3" y="297.5" width="3.5" height="7.9" fill="#707274" opacity="0.70"/><rect x="959.5" y="297.6" width="1.6" height="5.6" fill="#707274" opacity="0.69"/><rect x="952.0" y="294.8" width="1.8" height="5.0" fill="#707274" opacity="0.65"/><rect x="960.8" y="290.1" width="3.0" height="4.8" fill="#707274" opacity="0.61"/><rect x="964.8" y="292.2" width="3.5" height="9.1" fill="#707274" opacity="0.91"/><rect x="952.2" y="294.5" width="1.6" height="9.5" fill="#707274" opacity="0.89"/><rect x="960.1" y="294.5" width="2.1" height="8.8" fill="#707274" opacity="0.77"/><rect x="960.1" y="291.4" width="1.9" height="3.9" fill="#707274" opacity="0.85"/><rect x="958.9" y="291.4" width="3.3" height="5.2" fill="#707274" opacity="0.74"/><rect x="952.5" y="292.7" width="3.2" height="5.7" fill="#707274" opacity="0.66"/><rect x="957.9" y="293.2" width="3.4" height="4.2" fill="#707274" opacity="0.94"/><rect x="978.8" y="302.0" width="2.9" height="4.9" fill="#707274" opacity="0.77"/><rect x="982.0" y="295.6" width="1.8" height="5.9" fill="#707274" opacity="0.95"/><rect x="992.0" y="302.3" width="1.6" height="5.4" fill="#707274" opacity="0.91"/><rect x="978.8" y="300.3" width="2.0" height="9.9" fill="#707274" opacity="0.61"/><rect x="989.3" y="296.4" width="1.7" height="3.5" fill="#707274" opacity="0.89"/><rect x="985.4" y="294.9" width="2.4" height="9.4" fill="#707274" opacity="0.68"/><rect x="986.0" y="294.4" width="1.8" height="8.5" fill="#707274" opacity="0.85"/><rect x="980.8" y="293.8" width="1.6" height="7.5" fill="#707274" opacity="0.77"/><rect x="981.8" y="295.1" width="2.7" height="8.1" fill="#707274" opacity="0.88"/><rect x="986.2" y="295.0" width="1.5" height="8.3" fill="#707274" opacity="0.74"/><rect x="1018.5" y="296.4" width="3.2" height="5.7" fill="#707274" opacity="0.89"/><rect x="1020.8" y="299.9" width="1.4" height="9.4" fill="#707274" opacity="0.77"/><rect x="1021.0" y="298.1" width="1.8" height="8.9" fill="#707274" opacity="0.73"/><rect x="1009.6" y="299.0" width="2.7" height="3.5" fill="#707274" opacity="0.78"/><rect x="1014.1" y="300.1" width="1.7" height="8.1" fill="#707274" opacity="0.89"/><rect x="1020.8" y="298.6" width="3.0" height="6.0" fill="#707274" opacity="0.86"/><rect x="1008.0" y="303.0" width="3.5" height="6.7" fill="#707274" opacity="0.78"/><rect x="1015.5" y="300.3" width="1.4" height="9.8" fill="#707274" opacity="0.68"/><rect x="1009.9" y="296.8" width="2.0" height="8.8" fill="#707274" opacity="0.61"/><rect x="1008.5" y="301.6" width="1.8" height="3.6" fill="#707274" opacity="0.81"/><rect x="1041.2" y="301.2" width="2.9" height="4.2" fill="#707274" opacity="0.90"/><rect x="1043.5" y="297.4" width="1.7" height="6.7" fill="#707274" opacity="0.78"/><rect x="1036.5" y="298.0" width="2.3" height="4.4" fill="#707274" opacity="0.81"/><rect x="1045.8" y="298.2" width="2.7" height="8.4" fill="#707274" opacity="0.66"/><rect x="1045.2" y="304.5" width="2.3" height="6.2" fill="#707274" opacity="0.89"/><rect x="1040.4" y="300.2" width="3.5" height="8.5" fill="#707274" opacity="0.72"/><rect x="1035.8" y="299.7" width="2.4" height="9.9" fill="#707274" opacity="0.88"/><rect x="1046.6" y="303.5" width="3.3" height="3.8" fill="#707274" opacity="0.78"/><rect x="1047.3" y="304.5" width="1.9" height="6.2" fill="#707274" opacity="0.82"/><rect x="1037.8" y="301.2" width="1.6" height="6.3" fill="#707274" opacity="0.78"/><rect x="981.4" y="350.7" width="3.5" height="8.5" fill="#707274" opacity="0.93"/><rect x="992.4" y="358.7" width="3.3" height="9.3" fill="#707274" opacity="0.61"/><rect x="992.5" y="352.2" width="2.9" height="5.3" fill="#707274" opacity="0.79"/><rect x="997.6" y="356.5" width="2.0" height="6.9" fill="#707274" opacity="0.75"/><rect x="998.1" y="352.5" width="2.1" height="7.7" fill="#707274" opacity="0.64"/><rect x="991.7" y="360.5" width="2.5" height="5.2" fill="#707274" opacity="0.76"/><rect x="990.6" y="350.8" width="1.7" height="4.4" fill="#707274" opacity="0.70"/><rect x="988.3" y="352.5" width="1.9" height="4.1" fill="#707274" opacity="0.79"/><rect x="996.1" y="356.3" width="2.7" height="7.7" fill="#707274" opacity="0.67"/><rect x="993.8" y="354.5" width="2.6" height="7.5" fill="#707274" opacity="0.76"/><rect x="986.6" y="351.9" width="1.9" height="6.8" fill="#707274" opacity="0.73"/><rect x="991.5" y="349.1" width="2.2" height="9.1" fill="#707274" opacity="0.68"/><rect x="991.0" y="354.9" width="2.0" height="9.9" fill="#707274" opacity="0.70"/><rect x="994.9" y="350.9" width="1.5" height="9.2" fill="#707274" opacity="0.75"/><rect x="1031.5" y="341.3" width="2.4" height="8.3" fill="#707274" opacity="0.64"/><rect x="1032.8" y="344.8" width="3.0" height="4.5" fill="#707274" opacity="0.72"/><rect x="1033.8" y="343.1" width="2.8" height="9.0" fill="#707274" opacity="0.89"/><rect x="1035.1" y="343.4" width="3.0" height="8.4" fill="#707274" opacity="0.77"/><rect x="1037.3" y="343.3" width="3.4" height="4.3" fill="#707274" opacity="0.90"/><rect x="1031.0" y="343.6" width="2.7" height="6.7" fill="#707274" opacity="0.94"/><rect x="1062.7" y="321.5" width="3.1" height="9.2" fill="#707274" opacity="0.81"/><rect x="1060.8" y="321.7" width="2.4" height="8.2" fill="#707274" opacity="0.70"/><rect x="1060.9" y="322.3" width="2.2" height="5.6" fill="#707274" opacity="0.88"/><rect x="1065.5" y="322.0" width="2.4" height="4.7" fill="#707274" opacity="0.71"/><rect x="1058.4" y="322.5" width="2.7" height="4.1" fill="#707274" opacity="0.92"/><rect x="1060.2" y="324.1" width="3.2" height="9.7" fill="#707274" opacity="0.67"/><rect x="1061.3" y="324.5" width="1.4" height="3.8" fill="#707274" opacity="0.80"/><rect x="1062.0" y="324.5" width="3.1" height="7.0" fill="#707274" opacity="0.95"/><rect x="1098.1" y="305.1" width="2.9" height="6.0" fill="#707274" opacity="0.73"/><rect x="1098.6" y="303.8" width="3.5" height="7.9" fill="#707274" opacity="0.78"/><rect x="1095.6" y="304.0" width="2.3" height="7.1" fill="#707274" opacity="0.80"/><rect x="1100.3" y="308.7" width="2.5" height="6.4" fill="#707274" opacity="0.82"/><rect x="1101.0" y="303.7" width="2.6" height="8.8" fill="#707274" opacity="0.66"/><rect x="1096.9" y="308.8" width="3.2" height="6.8" fill="#707274" opacity="0.64"/><rect x="1130.4" y="307.1" width="3.2" height="9.9" fill="#707274" opacity="0.91"/><rect x="1127.5" y="303.9" width="2.0" height="6.8" fill="#707274" opacity="0.78"/><rect x="1126.1" y="304.1" width="2.8" height="7.4" fill="#707274" opacity="0.72"/><rect x="1131.0" y="306.8" width="1.5" height="6.2" fill="#707274" opacity="0.88"/><rect x="1126.8" y="307.1" width="1.4" height="5.5" fill="#707274" opacity="0.89"/><path d="M772 330v18" stroke="#6b6d70" stroke-width="0.800"/><path d="M815 314v16" stroke="#6b6d70" stroke-width="0.800"/><path d="M860 303v15" stroke="#6b6d70" stroke-width="0.800"/><path d="M904 292v14" stroke="#6b6d70" stroke-width="0.800"/><path d="M970 282v12" stroke="#6b6d70" stroke-width="0.800"/><path d="M993 281v10" stroke="#6b6d70" stroke-width="0.800"/><path d="M1052 287v12" stroke="#6b6d70" stroke-width="0.800"/><path d="M1102 288v14" stroke="#6b6d70" stroke-width="0.800"/><path d="M1130 292v12" stroke="#6b6d70" stroke-width="0.800"/><path d="M1188 300v8" stroke="#6b6d70" stroke-width="0.800"/><path d="M740 341v14" stroke="#6b6d70" stroke-width="0.800"/><path d="M757.600 397.500L755.800 385" stroke="#0000ff" stroke-width="1.400"/><path d="M757.600 397.500L744 403.500" stroke="#ff0000" stroke-width="1.400"/><path d="M757.600 397.500L770.500 404" stroke="#00e000" stroke-width="1.400"/></svg><!--MODEL_END-->
<div id="right"><svg width="38" height="771" viewBox="0 0 38 771" style="position:absolute;left:0;top:0"><rect x="0" y="90.9" width="36" height="1.800" fill="#3c3a39"/><rect x="0" y="360.7" width="36" height="1.800" fill="#3c3a39"/><rect x="0" y="409.7" width="36" height="1.800" fill="#3c3a39"/><rect x="0" y="590.5" width="36" height="1.800" fill="#3c3a39"/><rect x="0" y="683.3" width="36" height="1.800" fill="#3c3a39"/><g fill="none" stroke="#e0e0e0" stroke-width="1.500" stroke-linecap="round" stroke-linejoin="round"><path d="M14.7 28.8H11.7C5.0 28.8 5.0 18.9 11.4 18.5C12.9 11.6 24.3 11.6 25.2 18.5C31.5 18.9 31.5 28.8 24.9 28.8H23.1"/><path d="M18.3 18.3V35.1M13.5 22.8L18.3 27.0M22.7 24.5L18.3 28.6M20.7 20.9L18.3 23.3"/></g><g fill="none" stroke="#e0e0e0" stroke-width="1.400"><path d="M28.7 62.8V55.6H5.3V72.4H9.8V75.4H13.5"/><path d="M15.3 68.8V64.2H20.1M25.8 64.2H30.7V68.8M30.7 75.4V80.3H25.8M20.1 80.3H15.3V75.4"/></g><polygon points="22.7,67.4 27.1,69.9 27.1,74.9 22.7,77.4 18.4,74.9 18.4,69.9" fill="#e0e0e0"/><rect x="5.0" y="111.9" width="25.9" height="8.8" fill="none" stroke="#e0e0e0" stroke-width="1.400"/><path d="M7.6 120.6v-2.2M10.2 120.6v-3.6M12.8 120.6v-2.2M15.4 120.6v-3.6M18.0 120.6v-2.2M20.6 120.6v-3.6M23.1 120.6v-2.2M25.7 120.6v-3.6M28.3 120.6v-2.2" stroke="#e0e0e0" stroke-width="1.200" fill="none"/><rect x="5.0" y="122.1" width="25.9" height="1.8" fill="#e0e0e0"/><path d="M5.0 163.0L14.1 157.0L30.9 157.6L22.2 163.6Z" fill="none" stroke="#e0e0e0" stroke-width="1.300"/><path d="M13.1 155.8L22.7 147.1L22.7 166.0L13.1 174.7Z" fill="#e0e0e0"/><g fill="none" stroke="#e0e0e0" stroke-width="1.200"><path d="M6.2 199.5H22.7V215.5H6.2Z"/><path d="M12.9 194.3H29.7V210.3H12.9Z"/><path d="M6.2 199.5L12.9 194.3M22.7 199.5L29.7 194.3M22.7 215.5L29.7 210.3M6.2 215.5L12.9 210.3"/></g><path d="M15.5 199.5L20.1 195.6L20.1 211.2L15.5 215.1Z" fill="#e0e0e0"/><path d="M8.0 238.4H29.5V257.2H4.7V241.6Z" fill="none" stroke="#e0e0e0" stroke-width="1.500"/><path d="M30.7 240.4V258.4H6.2" fill="none" stroke="#e0e0e0" stroke-width="2.600"/><path d="M16.2 238.4V257.2M4.7 247.2H29.5" fill="none" stroke="#e0e0e0" stroke-width="1.200" stroke-dasharray="3.200 1.200 1.200 1.200"/><path d="M23.1 257.2V254.8H29.5" fill="none" stroke="#e0e0e0" stroke-width="1.200"/><circle cx="17.9" cy="293.1" r="7.600" fill="none" stroke="#e0e0e0" stroke-width="2"/><circle cx="17.9" cy="293.1" r="4.100" fill="#e0e0e0"/><path d="M17.9 281.9v3M17.9 301.3v3M6.7 293.1h3M26.1 293.1h3" stroke="#e0e0e0" stroke-width="2.200"/><circle cx="17.9" cy="336.7" r="12.800" fill="none" stroke="#e0e0e0" stroke-width="1.100"/><path d="M12.5 343.6V330.7Q15.9 329.8 19.2 331.6T25.8 332.4V339.4Q22.5 340.1 19.2 338.5T12.5 337.9" fill="none" stroke="#e0e0e0" stroke-width="1.300"/><path d="M3.2 389.9L32.7 373.2M3.5 399.5L32.7 383.4M4.2 384.3L22.7 395.1M12.9 378.3L31.5 388.7" stroke="#e0e0e0" stroke-width="1.200" fill="none"/><text x="3.2" y="382.2" font-family="Liberation Sans, sans-serif" font-size="6.500" font-weight="bold" fill="#e0e0e0">1</text><text x="13.1" y="375.8" font-family="Liberation Sans, sans-serif" font-size="6.500" font-weight="bold" fill="#e0e0e0">2</text><rect x="6.500" y="422.5" width="23" height="23" fill="none" stroke="#fff" stroke-width="1" stroke-dasharray="2.200 1.750"/><polygon points="17.9,428.2 23.6,431.5 23.6,438.1 17.9,441.4 12.2,438.1 12.2,431.5" fill="none" stroke="#e0e0e0" stroke-width="1.200"/><path d="M17.9 441.4V434.8L12.2 431.5M17.9 434.8L23.6 431.5" stroke="#e0e0e0" stroke-width="1.200" fill="none"/><rect x="6.500" y="466.5" width="23" height="23" fill="none" stroke="#fff" stroke-width="1" stroke-dasharray="2.200 1.750"/><path d="M10.8 478.9Q18.3 468.9 25.8 478.9Q18.3 488.9 10.8 478.9Z" fill="#e0e0e0"/><circle cx="18.3" cy="478.9" r="3.200" fill="#535353"/><circle cx="18.3" cy="478.9" r="1.900" fill="#e0e0e0"/><rect x="6.500" y="510.5" width="23" height="23" fill="none" stroke="#fff" stroke-width="1" stroke-dasharray="2.200 1.750"/><path d="M10.4 522.9Q17.9 512.9 25.4 522.9Q17.9 532.9 10.4 522.9Z" fill="#e0e0e0"/><circle cx="17.9" cy="522.9" r="3.200" fill="#535353"/><circle cx="17.9" cy="522.9" r="1.900" fill="#e0e0e0"/><path d="M10.5 516.0L24.5 530.0" stroke="#535353" stroke-width="3.200"/><path d="M10.7 516.6L24.3 529.8" stroke="#e0e0e0" stroke-width="1.300"/><rect x="6.500" y="555.5" width="23" height="23" fill="none" stroke="#fff" stroke-width="1" stroke-dasharray="2.200 1.750"/><rect x="15.9" y="564.8" width="16.300" height="16.300" fill="#e0e0e0"/><path d="M19.9 568.8l8.400 8.400M28.3 568.8l-8.400 8.400" stroke="#3a3a3a" stroke-width="1.200"/><rect x="2" y="600" width="32" height="32" fill="#8a8a8a"/><path d="M6.2 606.6L18.3 604.2L29.1 606.6L18.3 611.4Z" fill="#777"/><path d="M6.2 606.6L18.3 611.4L17.9 628.2L8.0 620.4Z" fill="#e0e0e0"/><path d="M18.3 611.4L29.1 606.6L28.3 619.8L17.9 628.2Z" fill="#7a7a7a"/><path d="M6.2 606.6L18.3 604.2L29.1 606.6L28.3 619.8L17.9 628.2L8.0 620.4ZM6.2 606.6L18.3 611.4L29.1 606.6M18.3 611.4L17.9 628.2" fill="none" stroke="#e0e0e0" stroke-width="1.300" stroke-linejoin="round"/><rect x="2" y="644" width="32" height="32" fill="#8a8a8a"/><ellipse cx="17.9" cy="659.9" rx="11" ry="5" fill="none" stroke="#e0e0e0" stroke-width="1.900"/><ellipse cx="17.9" cy="659.9" rx="4.800" ry="10.200" fill="none" stroke="#e0e0e0" stroke-width="1.900"/><path d="M17.9 656.9V659.9L14.7 663.1M17.9 659.9L21.1 663.1" stroke="#f4f4f4" stroke-width="0.800" fill="none"/><path d="M2 765V769.2H6.200Z" fill="#fff"/></svg></div>
<div class="abs" style="left:1833px;top:0;width:2px;height:814px;background:#000"></div>
<svg class="abs" id="arrows" style="left:0;top:0;pointer-events:none" width="1835" height="814" viewBox="0 0 1835 814">
<defs><filter id="ash" x="-5%" y="-5%" width="115%" height="115%"><feGaussianBlur in="SourceAlpha" stdDeviation="1.600"/><feOffset dx="2.500" dy="3"/><feComponentTransfer><feFuncA type="linear" slope="0.550"/></feComponentTransfer><feMerge><feMergeNode/><feMergeNode in="SourceGraphic"/></feMerge></filter></defs>
<g filter="url(#ash)" fill="#c00000" stroke="none">
<path d="M401.500 161.600 L588.300 312.400 L589.400 314 L588 315.500 L247.700 452.600 L246.600 450 L583.600 313.600 L399.700 163.800Z"/>
<path d="M390.600 153.700L406.800 156.400L397.400 167.100Z"/>
<path d="M234.600 457.200L245.600 445.200L251.400 458.900Z"/>
</g></svg>
</body>
</html>
